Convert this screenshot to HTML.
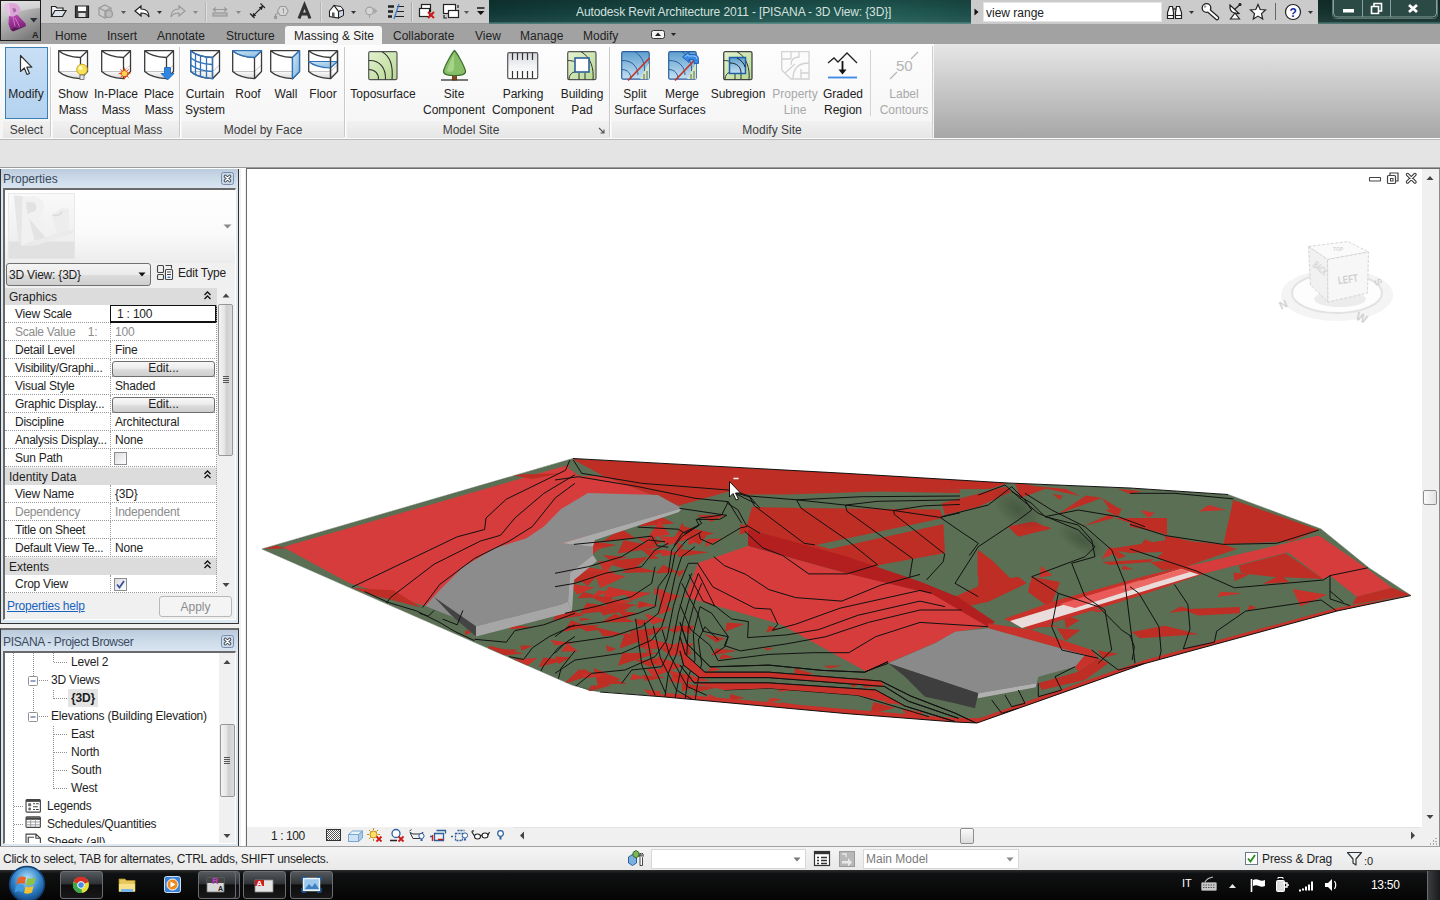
<!DOCTYPE html>
<html><head><meta charset="utf-8">
<style>
*{box-sizing:border-box;margin:0;padding:0}
html,body{width:1440px;height:900px;overflow:hidden}
body{position:relative;background:#e3e3e3;font-family:"Liberation Sans",sans-serif;font-size:12px;color:#1e1e1e}
.abs{position:absolute}
.t{position:absolute;white-space:nowrap;line-height:14px}
/* title bar */
#title{left:0;top:0;width:1440px;height:24px;background:linear-gradient(90deg,#0f3533 0,#103836 34%,#1a4d49 48%,#215b55 62%,#1c4f4a 67%,#15332f 92%,#13302c 100%)}
#title:after{content:'';position:absolute;left:0;top:0;width:100%;height:24px;background:linear-gradient(180deg,rgba(0,0,0,0.180) 0,rgba(0,0,0,0) 55%,rgba(255,255,255,0.050) 90%,rgba(150,200,195,0.450) 96%,rgba(150,200,195,0.450) 100%)}
#qat{left:40px;top:0;width:449px;height:24px;background:#cbcbcb;border-bottom:1px solid #9a9a9a}
#search{left:971px;top:0;width:347px;height:24px;background:#cbcbcb}
#tabs{left:0;top:24px;width:1440px;height:21px;background:#a2a2a2}
#appbtn{display:none}
.tab{position:absolute;top:28px;font-size:12px;line-height:16px;color:#222;white-space:nowrap}
#ribbon{left:0;top:44px;width:934px;height:96px;background:linear-gradient(180deg,#fdfdfd 0,#f4f4f4 100%)}
#ribbonR{left:934px;top:44px;width:506px;height:95px;background:linear-gradient(180deg,#e6e6e6 0,#a6a6a6 100%)}
#optbar{left:0;top:140px;width:1440px;height:28px;background:#e4e4e4}
</style></head><body>
<div id="title" class="abs"></div>
<div id="qat" class="abs"></div>
<div id="search" class="abs"></div>
<div id="tabs" class="abs"></div>
<div id="appbtn" class="abs"></div>
<div id="ribbon" class="abs"></div>
<div id="ribbonR" class="abs"></div>
<div id="optbar" class="abs"></div>
<!-- ===== title text ===== -->
<div class="t" style="left:576px;top:4px;font-size:12px;line-height:16px;color:#d6e0df;letter-spacing:-0.120px">Autodesk Revit Architecture 2011 - [PISANA - 3D View: {3D}]</div>
<!-- app button R -->
<svg class="abs" style="left:0;top:0" width="41" height="41" viewBox="0 0 41 41">
 <defs><linearGradient id="ab1" x1="0" y1="0" x2="0.600" y2="1"><stop offset="0" stop-color="#e4e4e4"/><stop offset="0.450" stop-color="#b4b4b4"/><stop offset="1" stop-color="#7c7c7c"/></linearGradient>
 <linearGradient id="ab2" x1="0" y1="0" x2="0" y2="1"><stop offset="0" stop-color="#e2e2e2"/><stop offset="1" stop-color="#bcbcbc"/></linearGradient>
 <linearGradient id="rg" x1="0" y1="0" x2="0.300" y2="1"><stop offset="0" stop-color="#c04cb6"/><stop offset="1" stop-color="#7d1f7a"/></linearGradient></defs>
 <rect x="0" y="0" width="41" height="41" fill="#1c1c1c"/>
 <rect x="1" y="1" width="39" height="39" fill="url(#ab1)"/>
 <path d="M1 24 Q10 10 40 8 V1 H1Z" fill="url(#ab2)" opacity="0.850"/>
 <path d="M9 16 L13 16.500 L17 14.500 L26 24 L24 27 L18 27.500 L14 27 L10.500 29.500 L8.500 24Z" fill="url(#rg)"/>
 <path d="M10.500 29.500 L14 27 L18 27.500 L24 27 L26 24 L25.500 26.500 L13 31.500Z" fill="#5e155c"/>
 <path d="M13.200 17 L15 26.500 M15 17.500 L19.500 26.500" stroke="#d67ccf" stroke-width="0.900" fill="none"/>
 <path d="M5 4.500 L9 3 L16 3.500 Q20 6 20.500 10 Q20 13 17 14.500 L13 16.500 L9 16 L7 12 L4.500 8Z" fill="#dca6d9"/>
 <path d="M5 4.500 L9 3 L10.500 15 L9 16 L7 12 L4.500 8Z" fill="#e9c0e6"/>
 <path d="M12.500 8 L15.500 8.500 Q16.500 10 16 11.500 L13.500 12.500Z" fill="#a668a6"/>
 <path d="M30 18 h7.500 l-3.750 4.500 z" fill="#2c3038"/>
 <text x="32" y="38" font-family="Liberation Sans" font-weight="bold" font-size="9" fill="#222">A</text>
</svg>
<!-- QAT icons -->
<svg class="abs" style="left:40px;top:0" width="450" height="24" viewBox="40 0 450 24" fill="none" stroke="#222" stroke-width="1.2">
 <!-- open -->
 <path d="M51.500 16.500 V6.500 h4 l1.500 1.500 h6 v2.500" fill="#f4f4f4"/><path d="M51.500 16.500 l3.500-6 h11 l-3.500 6 z" fill="#dde3ea"/>
 <!-- save -->
 <path d="M75.5 6 h13 v11.5 h-13 z" fill="#444"/><rect x="78" y="6.5" width="8" height="4.5" fill="#fff" stroke="none"/><rect x="78.5" y="13" width="7" height="4" fill="#ddd" stroke="none"/>
 <!-- sync gray -->
 <g stroke="#9a9a9a"><path d="M99 8 l6-3 6 3 v7 l-6 3 -6-3 z"/><path d="M99 8 l6 3 6-3 M105 11 v7"/><circle cx="109" cy="14" r="3.5" fill="#bbb"/></g>
 <path d="M121 11 h5 l-2.500 3 z" fill="#555" stroke="none"/>
 <!-- undo -->
 <path d="M135 11 l6-5 v3 q8 0 8 8 q-2-4-8-4 v3 z" fill="#fff"/>
 <path d="M157 11 h5 l-2.500 3 z" fill="#333" stroke="none"/>
 <!-- redo gray -->
 <path d="M185 11 l-6-5 v3 q-8 0-8 8 q2-4 8-4 v3 z" stroke="#9a9a9a"/>
 <path d="M193 11 h5 l-2.5 3 z" fill="#888" stroke="none"/>
 <path d="M205.500 2 v20" stroke="#b4b4b4" stroke-width="1"/><path d="M206.500 2 v20" stroke="#dedede" stroke-width="1"/>
 <!-- measure gray -->
 <g stroke="#9a9a9a"><path d="M213 9.5 h14 M213 9.5 l3-2 M213 9.5 l3 2 M227 9.5 l-3-2 M227 9.5 l-3 2"/><rect x="213" y="13" width="14" height="3" fill="#bbb"/></g>
 <path d="M236 11 h5 l-2.5 3 z" fill="#888" stroke="none"/>
 <!-- aligned dim -->
 <path d="M252.500 16.500 l10-10 M250 13.500 l4.500 4.500 M260.500 3.500 l4.500 4.500" stroke-width="1.100"/><path d="M252 17 l1.200-4.200 3 3z M263 6 l-1.200 4.200 -3-3z" fill="#222" stroke="none"/>
 <!-- tag gray -->
 <g stroke="#9a9a9a" stroke-width="1.100"><path d="M277.500 11 l2.700-4.500 h5.300 l2.700 4.500 -2.700 4.500 h-5.300z" fill="#d8d8d8"/><path d="M282.300 9.500 l1.200-1 v5" stroke-width="1"/><path d="M278 13 l-2.500 1.500 v2"/><rect x="274.500" y="16.500" width="2" height="2" fill="#d8d8d8"/></g>
 <!-- A text -->
 <path d="M299 18.500 L304.500 5 L310 18.500 M301 14 h7" stroke-width="3" stroke="#333"/>
 <path d="M320.500 2 v20" stroke="#b4b4b4" stroke-width="1"/><path d="M321.500 2 v20" stroke="#dedede" stroke-width="1"/>
 <!-- house -->
 <path d="M334 5.500 L341 6.500 L343.500 10 L338.500 11.500Z" fill="#f4f4f4" stroke-width="1"/><path d="M338.500 11.500 L343.500 10 V15.500 L338.500 18Z" fill="#c9d6e6" stroke-width="1"/><path d="M329.500 11 L334 5.500 L338.500 11.500 V18 L329.500 16.500Z" fill="#fff" stroke-width="1.100"/><rect x="332" y="12.500" width="2.500" height="4.500" fill="#555" stroke="none"/>
 <path d="M351 11 h5 l-2.500 3 z" fill="#333" stroke="none"/>
 <!-- circle arrow gray -->
 <g stroke="#a0a0a0"><circle cx="369.500" cy="11" r="3.800" fill="#d4d4d4"/><path d="M373.500 7.500 l4 3.500 -4 3.500z" fill="#a8a8a8" stroke="none"/><path d="M369.500 15 v3" stroke-width="1"/></g>
 <!-- thin lines -->
 <path d="M388 6.5 h6 M388 11.5 h5 M388 16.5 h4" stroke-width="2.4"/><path d="M397 6.5 h7 M396 11.5 h8 M395 16.5 h9" stroke-width="1"/><path d="M399 4 l-5 15" stroke="#3a78c8" stroke-width="1.3"/>
 <path d="M411.5 2 v20" stroke="#aaa" stroke-width="1"/><path d="M412.5 2 v20" stroke="#ddd" stroke-width="1"/>
 <!-- close hidden -->
 <rect x="421.500" y="4.500" width="9" height="7" fill="#fff"/><rect x="419.500" y="8.500" width="10" height="8" fill="#fff"/><path d="M428 12 l6 6 M434 12 l-6 6" stroke="#d01818" stroke-width="2"/>
 <!-- switch windows -->
 <rect x="443.500" y="4.500" width="12" height="9" fill="#fff"/><rect x="448.500" y="10.500" width="10" height="7" fill="#fff"/><path d="M444 15 v3 h3 M458 8 v-3" />
 <path d="M464 11 h5 l-2.500 3 z" fill="#555" stroke="none"/>
 <!-- customize -->
 <path d="M477 8 h7.500" stroke-width="1.600"/><path d="M477 11 h7.500 l-3.750 4 z" fill="#111" stroke="none"/>
</svg>
<!-- search strip -->
<div class="abs" style="left:983px;top:2px;width:179px;height:20px;background:#fff;border:1px solid #e4e4e4"></div>
<div class="t" style="left:986px;top:5px;font-size:12px;line-height:16px;color:#222">view range</div>
<svg class="abs" style="left:971px;top:0" width="350" height="24" viewBox="971 0 350 24" fill="none" stroke="#222" stroke-width="1.200">
 <path d="M974.500 8.500 v7 l4-3.500z" fill="#111" stroke="none"/>
 <!-- binoculars -->
 <path d="M1167.500 18.500 v-6 l2-6 h3 l1 6 v6 z M1175.500 18.500 v-6 l1-6 h3 l2 6 v6 z" fill="#fff"/><path d="M1173 9 h3" /><path d="M1167.500 15.500 h6 M1175.500 15.500 h6"/>
 <path d="M1189 11 h5 l-2.500 3 z" fill="#333" stroke="none"/>
 <!-- key -->
 <path d="M1209 11 L1217 18" stroke="#222" stroke-width="4.600" stroke-linecap="round"/><circle cx="1206.500" cy="8" r="4.300" fill="#fff" stroke="#222" stroke-width="1.300"/><path d="M1209 11 L1217 18" stroke="#fff" stroke-width="2.200" stroke-linecap="round"/><circle cx="1205" cy="6.500" r="1.200" fill="#999" stroke="none"/>
 <!-- satellite -->
 <path d="M1230 5 q-1 9 9 8.500 z" fill="#fff"/><path d="M1234.500 9.500 l5-4.500"/><circle cx="1240" cy="4.500" r="1" fill="#222"/><path d="M1235 13 l-4.500 6 h9 z" fill="#fff"/>
 <!-- star -->
 <path d="M1258 4.500 l2.200 5 5.300 0.500 -4 3.600 1.200 5.400 -4.700-2.900 -4.700 2.900 1.200-5.400 -4-3.600 5.300-0.500z" fill="#fff"/>
 <path d="M1275.500 3 v17" stroke="#666" stroke-width="1"/>
 <!-- help -->
 <circle cx="1293" cy="12" r="7.500" fill="#fff"/>
 <text x="1289.500" y="16.500" font-family="Liberation Sans" font-weight="bold" font-size="12" fill="#1a2ca0" stroke="none">?</text>
 <path d="M1308 11 h5 l-2.500 3 z" fill="#333" stroke="none"/>
</svg>
<!-- window controls -->
<svg class="abs" style="left:1325px;top:0" width="115" height="24" viewBox="1325 0 115 24">
 <path d="M1333.500 0 v13 q0 4 4 4 h95 q4 0 4-4 v-13" fill="#2b4a45" stroke="#8aa09c" stroke-width="1"/>
 <path d="M1362.500 0 v17 M1390.500 0 v17" stroke="#8aa09c" stroke-width="1"/><path d="M1332.500 0 v14 q0 4.500 4.500 4.500 h96 q4.500 0 4.500-4.500 v-14" fill="none" stroke="#5a7571" stroke-width="1"/>
 <rect x="1343" y="9" width="11" height="3.500" fill="#fff"/>
 <path d="M1371.500 6.500 h7 v7 h-7 z M1374 6 v-2.500 h7.500 v7.500 h-2.500" fill="none" stroke="#fff" stroke-width="1.600"/>
 <path d="M1409 5 l8 7 M1417 5 l-8 7" stroke="#fff" stroke-width="2.800"/>
</svg>
<!-- tabs -->
<div class="abs" style="left:285px;top:26px;width:97px;height:19px;background:#f6f6f6;border-radius:3px 3px 0 0"></div>
<div class="tab" style="left:55px">Home</div>
<div class="tab" style="left:107px">Insert</div>
<div class="tab" style="left:157px">Annotate</div>
<div class="tab" style="left:226px">Structure</div>
<div class="tab" style="left:294px">Massing &amp; Site</div>
<div class="tab" style="left:393px">Collaborate</div>
<div class="tab" style="left:475px">View</div>
<div class="tab" style="left:520px">Manage</div>
<div class="tab" style="left:583px">Modify</div>
<svg class="abs" style="left:648px;top:28px" width="32" height="14" viewBox="0 0 32 14"><rect x="3.500" y="2.500" width="13" height="8" rx="2" fill="#f4f4f4" stroke="#333"/><path d="M7 8 h6 l-3-3.500z" fill="#222"/><path d="M23 5 h5 l-2.500 3z" fill="#222"/></svg>
<!-- ===== ribbon ===== -->
<style>
.rl{position:absolute;top:86px;width:90px;text-align:center;font-size:12px;line-height:16px;color:#222;white-space:nowrap}
.rl.dis{color:#a8a8a8}
.pl{position:absolute;top:122px;text-align:center;font-size:12px;line-height:18px;color:#3c3c3c;white-space:nowrap;background:linear-gradient(180deg,#f1f1f1,#e6e6e6);height:17px;top:121px}
.psep{position:absolute;top:47px;width:2px;height:90px;border-left:1px solid #c9c9c9;border-right:1px solid #fff}
.ic{position:absolute;overflow:visible}
</style>
<div class="abs" style="left:0;top:139px;width:1440px;height:1px;background:#b9b9b9"></div>
<div class="abs" style="left:0;top:138px;width:1440px;height:1px;background:#fafafa"></div>
<div class="abs" style="left:933px;top:45px;width:1px;height:93px;background:#f4f4f4"></div>
<!-- modify button -->
<div class="abs" style="left:5px;top:47px;width:43px;height:72px;background:linear-gradient(180deg,#c9dff5 0,#bdd8f2 50%,#b4d2ef 100%);border:1px solid #3c7fb1"></div>
<svg class="ic" style="left:18px;top:54px" width="16" height="24" viewBox="0 0 16 24"><path d="M2.500 1.500 V17.500 L6.300 14 L9 20.500 L11.500 19.500 L8.800 13.200 H13.800 Z" fill="#fff" stroke="#333" stroke-width="1.200" stroke-linejoin="round"/></svg>
<div class="rl" style="left:-19px">Modify</div>
<!-- panel labels -->
<div class="pl" style="left:3px;width:47px">Select</div>
<div class="pl" style="left:53px;width:126px">Conceptual Mass</div>
<div class="pl" style="left:182px;width:162px">Model by Face</div>
<div class="pl" style="left:347px;width:262px;padding-right:14px">Model Site</div>
<div class="pl" style="left:612px;width:320px">Modify Site</div>
<svg class="ic" style="left:598px;top:127px" width="8" height="8" viewBox="0 0 8 8"><path d="M1 1 l4.500 4.500 M6 2.500 v3.500 h-3.500" stroke="#555" fill="none" stroke-width="1.100"/></svg>
<div class="psep" style="left:50px"></div><div class="psep" style="left:179px"></div><div class="psep" style="left:344px"></div><div class="psep" style="left:609px"></div>
<div class="abs" style="left:870px;top:50px;width:1px;height:66px;background:#d4d4d4"></div>
<div class="abs" style="left:932px;top:46px;width:1px;height:92px;background:#d0d0d0"></div>
<!-- labels -->
<div class="rl" style="left:28px">Show<br>Mass</div>
<div class="rl" style="left:71px">In-Place<br>Mass</div>
<div class="rl" style="left:114px">Place<br>Mass</div>
<div class="rl" style="left:160px">Curtain<br>System</div>
<div class="rl" style="left:203px">Roof</div>
<div class="rl" style="left:241px">Wall</div>
<div class="rl" style="left:278px">Floor</div>
<div class="rl" style="left:338px">Toposurface</div>
<div class="rl" style="left:409px">Site<br>Component</div>
<div class="rl" style="left:478px">Parking<br>Component</div>
<div class="rl" style="left:537px">Building<br>Pad</div>
<div class="rl" style="left:590px">Split<br>Surface</div>
<div class="rl" style="left:637px">Merge<br>Surfaces</div>
<div class="rl" style="left:693px">Subregion</div>
<div class="rl dis" style="left:750px">Property<br>Line</div>
<div class="rl" style="left:798px">Graded<br>Region</div>
<div class="rl dis" style="left:859px">Label<br>Contours</div>
<!-- icons -->
<svg width="0" height="0" style="position:absolute"><defs>
 <linearGradient id="mfl" x1="0" y1="0" x2="0" y2="1"><stop offset="0" stop-color="#fff"/><stop offset="0.700" stop-color="#fff"/><stop offset="1" stop-color="#d9d9d9"/></linearGradient>
 <linearGradient id="blu" x1="0" y1="0" x2="1" y2="1"><stop offset="0" stop-color="#d3e8f6"/><stop offset="1" stop-color="#7fb6dd"/></linearGradient>
 <linearGradient id="grn" x1="0" y1="0" x2="1" y2="1"><stop offset="0" stop-color="#e3f1cf"/><stop offset="1" stop-color="#b7d993"/></linearGradient>
 <linearGradient id="blu2" x1="0" y1="0" x2="0" y2="1"><stop offset="0" stop-color="#5f9fce"/><stop offset="1" stop-color="#c5e0f2"/></linearGradient>
 <g id="mass"><path d="M0.700 0.700 H29.500 V21.500 L22.500 28.700 C13 28 5 25.500 0.700 21.500 Z" fill="url(#mfl)" stroke="none"/><path d="M0.700 21.500 H22.500 L29.500 15" stroke="#c4c4c4" stroke-width="1" fill="none"/><path d="M0.700 0.700 H29.500 V21.500 L22.500 28.700 C13 28 5 25.500 0.700 21.500 Z M0.700 0.700 C5 4.500 13 7 22.500 7.500 L29.500 0.700 M22.500 7.500 V28.700" fill="none" stroke="#3a3a3a" stroke-width="1.300" stroke-linejoin="round"/></g>
</defs></svg>
<svg class="ic" style="left:58px;top:50px" width="32" height="32" viewBox="0 0 32 32"><use href="#mass"/><circle cx="24" cy="19.500" r="5.300" fill="#f9e256" stroke="#c9a820" stroke-width="1"/><circle cx="22.500" cy="18" r="2" fill="#fffbd0"/><rect x="22" y="25" width="4" height="4.500" fill="#e8e8e8" stroke="#666" stroke-width="0.800"/></svg>
<svg class="ic" style="left:101px;top:50px" width="32" height="32" viewBox="0 0 32 32"><use href="#mass"/><g transform="translate(23.500 23.500)"><path d="M0-6.500 L1.500-2.500 L5-5 L2.500-1.500 L6.500 0 L2.500 1.500 L5 5 L1.500 2.500 L0 6.500 L-1.500 2.500 L-5 5 L-2.500 1.500 L-6.500 0 L-2.500-1.500 L-5-5 L-1.500-2.500Z" fill="#e8501c"/><circle r="2.600" fill="#ffd84a"/></g></svg>
<svg class="ic" style="left:144px;top:50px" width="32" height="32" viewBox="0 0 32 32"><use href="#mass"/><path d="M20.500 17.500 h6 v6 h3.500 l-6.500 6.500 -6.500-6.500 h3.500z" fill="#2f86e0" stroke="#1d62b5" stroke-width="0.800"/></svg>
<!-- curtain -->
<svg class="ic" style="left:190px;top:50px" width="32" height="32" viewBox="0 0 32 32"><use href="#mass"/><path d="M0.700 0.700 C5 4.500 13 7 22.500 7.500 V28.700 C13 28 5 25.500 0.700 21.500 Z M0.700 7.700 C5 11.500 13 14 22.500 14.500 M0.700 14.700 C5 18.500 13 21 22.500 21.500 M5.500 4 V25 M10.500 6 V27 M16.500 7 V28.300" fill="none" stroke="#2f72b8" stroke-width="1.300"/></svg>
<!-- roof -->
<svg class="ic" style="left:232px;top:50px" width="32" height="32" viewBox="0 0 32 32"><use href="#mass"/><path d="M0.700 0.700 H29.500 L22.500 7.500 C13 7 5 4.500 0.700 0.700Z" fill="url(#blu)" stroke="#2f72b8" stroke-width="1.300" stroke-linejoin="round"/></svg>
<!-- wall -->
<svg class="ic" style="left:270px;top:50px" width="32" height="32" viewBox="0 0 32 32"><use href="#mass"/><path d="M22.500 7.500 L29.500 0.700 V21.500 L22.500 28.700Z" fill="url(#blu)" stroke="#2f72b8" stroke-width="1.300" stroke-linejoin="round"/></svg>
<!-- floor -->
<svg class="ic" style="left:308px;top:50px" width="32" height="32" viewBox="0 0 32 32"><use href="#mass"/><path d="M0.700 11.500 H29.500 L22.500 18 C13 17.500 5 15.500 0.700 11.500Z" fill="url(#blu)" stroke="#2f72b8" stroke-width="1.200" stroke-linejoin="round"/><path d="M22.500 7.500 V28.700 M29.500 0.700 V21.500" stroke="#3a3a3a" stroke-width="1.300" fill="none"/></svg>
<!-- toposurface -->
<svg class="ic" style="left:368px;top:51px" width="30" height="30" viewBox="0 0 30 30"><rect x="0.700" y="0.700" width="28.300" height="28" rx="1.500" fill="url(#grn)" stroke="#555" stroke-width="1.200"/><path d="M14 0.700 C24 6 25 18 24 28.700 M0.700 9.500 C12 9 18 17 17.500 28.700 M0.700 18.500 C7 18.500 11 23 10.500 28.700" fill="none" stroke="#333" stroke-width="1.100"/></svg>
<!-- tree -->
<svg class="ic" style="left:440px;top:49px" width="30" height="32" viewBox="0 0 30 32"><path d="M1 31 H28" stroke="#222" stroke-width="1.200"/><rect x="12.500" y="25" width="4" height="6" fill="#8a4a1c" stroke="#5a2c0c" stroke-width="0.800"/><path d="M14.500 1.500 C17 4 24 16 25.500 22 C26 25.500 21 26.500 14.500 26.500 C8 26.500 3 25.500 3.500 22 C5 16 12 4 14.500 1.500Z" fill="#86bf68" stroke="#3d6b2c" stroke-width="1.200"/><path d="M14 5 C11 11 8 17 7 22 C10 23.500 13 23 14 20Z" fill="#b4dc98" opacity="0.700"/></svg>
<!-- parking -->
<svg class="ic" style="left:507px;top:52px" width="32" height="28" viewBox="0 0 32 28"><defs><linearGradient id="pk" x1="0" y1="0" x2="0" y2="1"><stop offset="0" stop-color="#d4d7dc"/><stop offset="0.500" stop-color="#f2f3f5"/><stop offset="1" stop-color="#fff"/></linearGradient></defs><rect x="0.700" y="0.700" width="30" height="26" rx="1.500" fill="url(#pk)" stroke="#555" stroke-width="1.200"/><path d="M5.500 1 v7 M10.500 1 v7 M15.500 1 v7 M20.500 1 v7 M25.500 1 v7 M5.500 19 v7 M10.500 19 v7 M15.500 19 v7 M20.500 19 v7 M25.500 19 v7" stroke="#333" stroke-width="1.200"/></svg>
<!-- building pad -->
<svg class="ic" style="left:567px;top:51px" width="30" height="30" viewBox="0 0 30 30"><rect x="0.700" y="0.700" width="28.300" height="28" rx="1.500" fill="url(#grn)" stroke="#555" stroke-width="1.200"/><path d="M14 0.700 C24 6 27 18 26 28.700 M0.700 9.500 C6 9.500 8 11 8 11 M2 28.700 C2 24 5 21 8 21 M12 22 V28.700 M18 22 V28.700" fill="none" stroke="#333" stroke-width="1"/><rect x="8" y="7" width="14" height="14" fill="#fff" stroke="#2b5f9e" stroke-width="1.600"/></svg>
<!-- split surface -->
<svg class="ic" style="left:621px;top:51px" width="30" height="30" viewBox="0 0 30 30"><rect x="0.700" y="0.700" width="27.500" height="27.500" rx="1.500" fill="url(#blu2)" stroke="#2b5f9e" stroke-width="1.200"/><path d="M19 28 H28 V12Z" fill="#d3e8c0"/><path d="M14 0.700 C22 6 24 14 23.500 20 M0.700 9.500 C12 9 17 17 17 24 M0.700 18.500 C7 18.500 10 23 10 28" fill="none" stroke="#2b5f9e" stroke-width="1"/><path d="M7 29.500 L28.500 7" stroke="#c0392b" stroke-width="1.800"/><path d="M23 28 V23 M26 28 V20" stroke="#444" stroke-width="0.800"/></svg>
<!-- merge surfaces -->
<svg class="ic" style="left:668px;top:51px" width="32" height="30" viewBox="0 0 32 30"><rect x="0.700" y="0.700" width="27.500" height="27.500" rx="1.500" fill="url(#blu2)" stroke="#2b5f9e" stroke-width="1.200"/><path d="M19 28 H28 V12Z" fill="#d3e8c0"/><path d="M14 0.700 C22 6 24 14 23.500 20 M0.700 9.500 C12 9 17 17 17 24 M0.700 18.500 C7 18.500 10 23 10 28" fill="none" stroke="#2b5f9e" stroke-width="1"/><path d="M7 29.500 L28.500 7" stroke="#c0392b" stroke-width="1.800"/><path d="M23 28 V23 M26 28 V20" stroke="#444" stroke-width="0.800"/><path d="M14.500 6 L21 0.500 V3.500 H26 Q30.500 3.500 30.500 8.500 V12.500 H26 V9.500 Q26 8.500 25 8.500 H21 V11.500Z" fill="#3b8ae6" stroke="#1d5fb5" stroke-width="0.900" stroke-linejoin="round"/><path d="M17 6 L20 3.500 V5 H26 Q29 5 29 8" stroke="#9cc8f5" stroke-width="0.900" fill="none"/></svg>
<!-- subregion -->
<svg class="ic" style="left:723px;top:51px" width="30" height="30" viewBox="0 0 30 30"><rect x="0.700" y="0.700" width="28.300" height="28" rx="1.500" fill="url(#grn)" stroke="#444" stroke-width="1.300"/><path d="M14 0.700 C24 6 27 18 26 28.700 M0.700 9.500 C6 9.500 8 11 8 11 M2 28.700 C2 24 5 21 8 21 M12 22 V28.700 M18 22 V28.700" fill="none" stroke="#333" stroke-width="1"/><rect x="6.500" y="6.500" width="16" height="16" fill="url(#blu2)" stroke="#1f5fa8" stroke-width="1.500"/><path d="M7 12 C14 12 18 16 18 22 M14 7 C18 9 21 12 22 16" fill="none" stroke="#222" stroke-width="1"/></svg>
<!-- property line (disabled) -->
<svg class="ic" style="left:781px;top:51px" width="30" height="30" viewBox="0 0 30 30" fill="none" stroke="#d2d2d2" stroke-width="1.300"><path d="M0.700 0.700 H28 V28 H10 L0.700 19Z M10 0.700 V8 M0.700 8 H10 M28 12 C18 12 12 17 12 28 M18 0.700 V6 C12 6 10 10 10 14 M4 22 L14 13 M20 18 V28 M20 22 H28"/></svg>
<!-- graded region -->
<svg class="ic" style="left:827px;top:51px" width="32" height="30" viewBox="0 0 32 30" fill="none"><path d="M1 12 L7 7 L11 11 L20 2 L30 12" stroke="#222" stroke-width="1.300"/><path d="M15.500 10 V21" stroke="#111" stroke-width="1.800"/><path d="M11.500 18.500 h8 l-4 5z" fill="#111"/><path d="M1 26.500 H30" stroke="#3b8ae6" stroke-width="1.800"/></svg>
<!-- label contours (disabled) -->
<svg class="ic" style="left:889px;top:51px" width="30" height="30" viewBox="0 0 30 30"><path d="M1 28 L8 21 M22 8 L29 1" stroke="#b4b4b4" stroke-width="1.100"/><text x="7" y="20" font-family="Liberation Sans" font-size="15" fill="#b4b4b4">50</text></svg>

<style>
.ph{position:absolute;left:1px;width:237px;height:19px;background:linear-gradient(180deg,#bccbdc 0,#cfdcea 60%,#d9e5f1 100%)}
.pht{position:absolute;left:3px;font-size:12px;line-height:16px;color:#3a4a60;white-space:nowrap}
.pr{position:absolute;left:5px;width:212px;height:18px;border-bottom:1px dotted #9a9a9a;background:#fff}
.pr .l{letter-spacing:-0.250px;position:absolute;left:10px;top:1px;line-height:16px;white-space:nowrap}
.pr .v{letter-spacing:-0.200px;position:absolute;left:110px;top:1px;line-height:16px;white-space:nowrap}
.pr .d{position:absolute;left:105px;top:0;width:1px;height:18px;border-left:1px dotted #9a9a9a}
.pr.g .l,.pr.g .v{color:#8c8c8c}
.pg{position:absolute;left:5px;width:212px;height:18px;background:#dcdcdc}
.pg span{position:absolute;left:4px;top:1px;line-height:16px}
.eb{position:absolute;left:112px;width:103px;height:16px;border:1px solid #6e6e6e;border-radius:3px;background:linear-gradient(180deg,#f8f8f8 0,#ececec 45%,#dcdcdc 55%,#cecece 100%);text-align:center;line-height:13px;box-shadow:0 1px 0 #8a8a8a}
.tr{position:absolute;letter-spacing:-0.200px;font-size:12px;line-height:16px;white-space:nowrap;color:#1e1e1e}
</style>
<!-- seams -->
<div class="abs" style="left:0;top:167px;width:1440px;height:1px;background:#9c9c9c"></div>
<div class="abs" style="left:0;top:168px;width:246px;height:1px;background:#fff"></div>
<div class="abs" style="left:0;top:169px;width:246px;height:678px;background:#f0f0f0"></div>
<!-- properties frame -->
<div class="abs" style="left:0;top:169px;width:239px;height:455px;background:#dde7f2;border-left:1px solid #333;border-right:1px solid #333;border-bottom:1px solid #333"></div>
<div class="ph" style="top:169px"></div>
<div class="pht" style="top:171px">Properties</div>
<svg class="abs" style="left:221px;top:172px" width="13" height="13" viewBox="0 0 13 13"><rect x="0.500" y="0.500" width="12" height="12" rx="2" fill="#c9d8ea" stroke="#7b8ca6"/><path d="M4.300 4.300 L8.700 8.700 M8.700 4.300 L4.300 8.700" stroke="#3a4350" stroke-width="3.200" stroke-linecap="round"/><path d="M4.300 4.300 L8.700 8.700 M8.700 4.300 L4.300 8.700" stroke="#fff" stroke-width="1.400" stroke-linecap="round"/></svg>
<!-- inner panel -->
<div class="abs" style="left:3px;top:188px;width:233px;height:432px;background:#f0f0f0;border-top:2px solid #6a6a6a;border-left:2px solid #6a6a6a;border-right:1px solid #fff;border-bottom:1px solid #fff"></div>
<div class="abs" style="left:5px;top:190px;width:230px;height:73px;background:linear-gradient(180deg,#fff 0,#fafafa 60%,#ececec 100%)"></div>
<!-- preview -->
<svg class="abs" style="left:8px;top:193px" width="67" height="66" viewBox="0 0 67 66"><defs><linearGradient id="pv" x1="0" y1="0" x2="0" y2="1"><stop offset="0" stop-color="#f9f9f9"/><stop offset="0.700" stop-color="#efefef"/><stop offset="1" stop-color="#e6e6e6"/></linearGradient></defs>
<rect x="0.500" y="0.500" width="66" height="65" fill="url(#pv)" stroke="#e9e9e9"/>
<path d="M0.500 48.500 H66.500 V65.500 H0.500Z" fill="#e1e1e1"/>
<path d="M5.800 2.300 L15 3.500 L13.300 53 L10.400 47.400Z" fill="#e6e6e6"/>
<path d="M14.400 4 L25.400 2.900 Q37 5 36 16 Q35 23 30 24.500 L45 41.500 L38 45 L26.600 47.400 L13.300 53Z" fill="#f1f1f1"/>
<path d="M18 9 L26.500 9.200 Q29.500 13 27.500 17.500 L19.500 21Z" fill="#e2e2e2"/>
<path d="M21 25.500 L26.600 47.400 L38 45Z" fill="#e3e3e3"/>
<path d="M43 22 L54 15 L61 16 V37 L50 42 Z" fill="#ededed"/>
<path d="M45 22 Q50 24 54 19" stroke="#dcdcdc" stroke-width="1.500" fill="none"/>
<path d="M13.300 53 L45 41.500 L66 36 V40 L30 52Z" fill="#ebebeb"/>
</svg>
<svg class="abs" style="left:223px;top:224px" width="9" height="5" viewBox="0 0 9 5"><path d="M0.500 0.500 h8 l-4 4z" fill="#8a8a8a"/></svg>
<!-- combo -->
<div class="abs" style="left:6px;top:263px;width:145px;height:23px;border:1px solid #707070;border-radius:3px;background:linear-gradient(180deg,#f4f4f4 0,#ebebeb 50%,#dddddd 51%,#cfcfcf 100%)"></div>
<div class="tr" style="left:9px;top:267px">3D View: {3D}</div>
<svg class="abs" style="left:138px;top:272px" width="9" height="5" viewBox="0 0 9 5"><path d="M0.500 0.500 h7 l-3.500 4z" fill="#111"/></svg>
<svg class="abs" style="left:156px;top:264px" width="18" height="18" viewBox="0 0 18 18" fill="none" stroke="#444" stroke-width="1.100"><rect x="1.500" y="1.500" width="6" height="7" rx="1"/><rect x="1.500" y="10.500" width="6" height="5" rx="1"/><rect x="9.500" y="5.500" width="7" height="10" rx="1" fill="#fff"/><path d="M11 8 h4 M11 10.500 h4" /><rect x="11.500" y="12.500" width="3" height="1.500" fill="#3a78c8" stroke="none"/><path d="M9.500 1.500 h6 v3"/></svg>
<div class="tr" style="left:178px;top:265px">Edit Type</div>
<!-- table -->
<div class="pg" style="top:288px;height:17px"><span>Graphics</span></div>
<div class="pr" style="top:305px"><span class="l">View Scale</span><i class="d"></i></div>
<div class="abs" style="left:110px;top:305px;width:107px;height:18px;border:1px solid #111;background:#fff;box-shadow:inset 0 0 0 0 #000;border-width:1px 2px 2px 1px"></div>
<div class="tr" style="left:117px;top:306px">1 : 100</div>
<div class="pr g" style="top:323px"><span class="l">Scale Value&nbsp;&nbsp;&nbsp; 1:</span><span class="v">100</span><i class="d"></i></div>
<div class="pr" style="top:341px"><span class="l">Detail Level</span><span class="v">Fine</span><i class="d"></i></div>
<div class="pr" style="top:359px"><span class="l">Visibility/Graphi...</span><i class="d"></i></div>
<div class="eb" style="top:361px">Edit...</div>
<div class="pr" style="top:377px"><span class="l">Visual Style</span><span class="v">Shaded</span><i class="d"></i></div>
<div class="pr" style="top:395px"><span class="l">Graphic Display...</span><i class="d"></i></div>
<div class="eb" style="top:397px">Edit...</div>
<div class="pr" style="top:413px"><span class="l">Discipline</span><span class="v">Architectural</span><i class="d"></i></div>
<div class="pr" style="top:431px"><span class="l">Analysis Display...</span><span class="v">None</span><i class="d"></i></div>
<div class="pr" style="top:449px"><span class="l">Sun Path</span><i class="d"></i></div>
<div class="abs" style="left:114px;top:452px;width:13px;height:13px;border:1px solid #8a8f96;background:linear-gradient(135deg,#dcdcdc,#fff)"></div>
<div class="pg" style="top:468px"><span>Identity Data</span></div>
<div class="pr" style="top:485px"><span class="l">View Name</span><span class="v">{3D}</span><i class="d"></i></div>
<div class="pr g" style="top:503px"><span class="l">Dependency</span><span class="v">Independent</span><i class="d"></i></div>
<div class="pr" style="top:521px"><span class="l">Title on Sheet</span><i class="d"></i></div>
<div class="pr" style="top:539px"><span class="l">Default View Te...</span><span class="v">None</span><i class="d"></i></div>
<div class="pg" style="top:558px"><span>Extents</span></div>
<div class="pr" style="top:575px"><span class="l">Crop View</span><i class="d"></i></div>
<div class="abs" style="left:114px;top:578px;width:13px;height:13px;border:1px solid #8a8f96;background:linear-gradient(135deg,#dcdcdc,#fff)"></div>
<svg class="abs" style="left:115px;top:579px" width="11" height="11" viewBox="0 0 11 11"><path d="M2 5.500 L4.500 8.500 L9 2" stroke="#3b4f9e" stroke-width="1.800" fill="none"/></svg>
<svg class="abs" style="left:203px;top:290px" width="9" height="290" viewBox="0 0 9 290" fill="none" stroke="#111" stroke-width="1.300"><path d="M1.500 5 L4.500 2 L7.500 5 M1.500 9 L4.500 6 L7.500 9"/><path d="M1.500 184 L4.500 181 L7.500 184 M1.500 188 L4.500 185 L7.500 188"/><path d="M1.500 274 L4.500 271 L7.500 274 M1.500 278 L4.500 275 L7.500 278"/></svg>
<div class="abs" style="left:216px;top:305px;width:1px;height:288px;border-left:1px dotted #9a9a9a"></div>
<!-- prop scrollbar -->
<div class="abs" style="left:218px;top:287px;width:16px;height:306px;background:#f0f0f0"></div>
<div class="abs" style="left:218px;top:304px;width:15px;height:152px;border:1px solid #979797;border-radius:2px;background:linear-gradient(90deg,#f4f4f4 0,#e4e4e4 45%,#cfcfcf 55%,#dcdcdc 100%)"></div>
<svg class="abs" style="left:218px;top:287px" width="16" height="306" viewBox="0 0 16 306"><path d="M4.500 10.500 h7 l-3.500-4z" fill="#444"/><path d="M4.500 296 h7 l-3.500 4z" fill="#444"/><path d="M5 89.500 h6 M5 91.500 h6 M5 93.500 h6 M5 95.500 h6" stroke="#555" stroke-width="1"/></svg>
<!-- help + apply -->
<div class="tr" style="left:7px;top:598px;color:#1a62c0;text-decoration:underline">Properties help</div>
<div class="abs" style="left:159px;top:596px;width:73px;height:21px;border:1px solid #b8b8b8;border-radius:3px;background:#f4f4f4;text-align:center;line-height:20px;color:#8c8c8c">Apply</div>
<!-- project browser frame -->
<div class="abs" style="left:0;top:628px;width:239px;height:218px;background:#dde7f2;border:1px solid #333;border-top:2px solid #6a6a6a;border-bottom:none"></div>
<div class="ph" style="top:630px;height:21px"></div>
<div class="pht" style="top:634px;letter-spacing:-0.350px">PISANA - Project Browser</div>
<svg class="abs" style="left:221px;top:635px" width="13" height="13" viewBox="0 0 13 13"><rect x="0.500" y="0.500" width="12" height="12" rx="2" fill="#c9d8ea" stroke="#7b8ca6"/><path d="M4.300 4.300 L8.700 8.700 M8.700 4.300 L4.300 8.700" stroke="#3a4350" stroke-width="3.200" stroke-linecap="round"/><path d="M4.300 4.300 L8.700 8.700 M8.700 4.300 L4.300 8.700" stroke="#fff" stroke-width="1.400" stroke-linecap="round"/></svg>
<div class="abs" style="left:3px;top:651px;width:233px;height:193px;background:#fff;border-top:2px solid #6a6a6a;border-left:2px solid #6a6a6a;border-right:1px solid #fff;border-bottom:1px solid #fff;overflow:hidden"></div>
<!-- tree lines -->
<svg class="abs" style="left:5px;top:653px" width="214" height="190" viewBox="5 653 214 190" fill="none" stroke="#8f8f8f" stroke-width="1" stroke-dasharray="1 1" shape-rendering="crispEdges">
 <path d="M13.500 653 V843 M33.500 653 V676 M33.500 688 V712 M53.500 653 V663 M53.500 690 V699 M53.500 726 V789"/>
 <path d="M54 662.500 H67 M39 680.500 H48 M54 698.500 H67 M39 716.500 H48 M54 734.500 H67 M54 752.500 H67 M54 770.500 H67 M54 788.500 H67 M14 806.500 H23 M14 824.500 H23"/>
</svg>
<svg class="abs" style="left:28px;top:676px" width="11" height="48" viewBox="0 0 11 48"><rect x="0.500" y="0.500" width="9" height="9" rx="1" fill="#fff" stroke="#919191"/><path d="M2.500 5 h5" stroke="#2b4a8a" stroke-width="1"/><rect x="0.500" y="36.500" width="9" height="9" rx="1" fill="#fff" stroke="#919191"/><path d="M2.500 41 h5" stroke="#2b4a8a" stroke-width="1"/></svg>
<div class="tr" style="left:71px;top:654px">Level 2</div>
<div class="tr" style="left:51px;top:672px">3D Views</div>
<div class="abs" style="left:68px;top:689px;width:30px;height:18px;background:#e4e4e4"></div>
<div class="tr" style="left:71px;top:690px;font-weight:bold">{3D}</div>
<div class="tr" style="left:51px;top:708px">Elevations (Building Elevation)</div>
<div class="tr" style="left:71px;top:726px">East</div>
<div class="tr" style="left:71px;top:744px">North</div>
<div class="tr" style="left:71px;top:762px">South</div>
<div class="tr" style="left:71px;top:780px">West</div>
<div class="tr" style="left:47px;top:798px">Legends</div>
<div class="tr" style="left:47px;top:816px">Schedules/Quantities</div>
<div class="abs" style="left:47px;top:834px;width:120px;height:9px;overflow:hidden"><div class="tr" style="left:0;top:0">Sheets (all)</div></div>
<svg class="abs" style="left:25px;top:799px" width="17" height="44" viewBox="0 0 17 46" fill="none" stroke="#444" stroke-width="1.200"><rect x="0.700" y="0.700" width="15" height="13" rx="1" fill="#fff"/><path d="M0.700 2 H15.700" stroke-width="2"/><rect x="3" y="4.500" width="3" height="3" fill="#666" stroke="none"/><circle cx="4.500" cy="10.500" r="1.500" fill="#666" stroke="none"/><path d="M8 5 h2 M11 5 h3 M8 8 h5 M8 11 h2 M11 11 h3" stroke-width="1.100"/><rect x="0.700" y="18.700" width="15" height="11" rx="1" fill="#fff"/><path d="M0.700 20.500 H15.700" stroke-width="2.500"/><path d="M0.700 24 H15.700 M0.700 27 H15.700 M5.500 21 V29.500 M10.500 21 V29.500" stroke="#999" stroke-width="1"/><path d="M0.700 46 V36.700 H11 L15.700 41 V46 M11 36.700 V41 H15.700 M3 46 V40 H9" /></svg>
<!-- pb scrollbar -->
<div class="abs" style="left:219px;top:653px;width:16px;height:190px;background:#f0f0f0"></div>
<div class="abs" style="left:220px;top:724px;width:15px;height:73px;border:1px solid #979797;border-radius:2px;background:linear-gradient(90deg,#f4f4f4 0,#e4e4e4 45%,#cfcfcf 55%,#dcdcdc 100%)"></div>
<svg class="abs" style="left:219px;top:653px" width="16" height="190" viewBox="0 0 16 190"><path d="M4.500 11 h7 l-3.500-4z" fill="#444"/><path d="M4.500 181 h7 l-3.500 4z" fill="#444"/><path d="M5 104.500 h6 M5 106.500 h6 M5 108.500 h6 M5 110.500 h6" stroke="#555" stroke-width="1"/></svg>
<!-- splitter + view border -->
<div class="abs" style="left:241px;top:169px;width:4px;height:678px;background:#fff"></div>

<div class="abs" style="left:247px;top:169px;width:1175px;height:658px;background:#fff"></div>
<svg class="abs" style="left:247px;top:169px" width="1175" height="658" viewBox="247 169 1175 658" shape-rendering="auto">
<defs><clipPath id="tc"><polygon points="262.0,549.0 573.0,458.5 845.0,473.3 1008.0,483.0 1130.0,488.0 1228.0,494.5 1321.0,529.0 1369.0,568.0 1411.0,595.5 1337.0,611.0 1145.0,663.5 977.0,723.0 955.0,722.0 845.0,713.5 665.0,697.0 590.0,691.0 572.0,685.0 353.0,589.0"/></clipPath></defs>
<g clip-path="url(#tc)">
<polygon points="262.0,549.0 573.0,458.5 845.0,473.3 1008.0,483.0 1130.0,488.0 1228.0,494.5 1321.0,529.0 1369.0,568.0 1411.0,595.5 1337.0,611.0 1145.0,663.5 977.0,723.0 955.0,722.0 845.0,713.5 665.0,697.0 590.0,691.0 572.0,685.0 353.0,589.0" fill="#5a6f53" />
<polygon points="577.6,575.3 572.7,579.2 566.7,574.1" fill="#bf2e24" />
<polygon points="694.4,625.8 689.5,634.0 671.7,626.1" fill="#bf2e24" />
<polygon points="664.9,541.2 649.3,546.4 636.4,537.1" fill="#c8322a" />
<polygon points="651.7,592.7 630.7,600.7 622.2,590.9" fill="#c8322a" />
<polygon points="648.0,556.9 631.7,571.3 601.7,561.4" fill="#bf2e24" />
<polygon points="594.1,674.3 575.5,678.8 583.4,668.7" fill="#bf2e24" />
<polygon points="635.6,592.5 602.4,599.2 608.3,586.7" fill="#c8322a" />
<polygon points="593.4,674.4 563.2,684.3 579.1,669.2" fill="#bf2e24" />
<polygon points="471.7,632.0 464.9,635.2 465.5,630.1" fill="#bf2e24" />
<polygon points="633.1,601.1 598.9,611.0 613.3,599.2" fill="#c8322a" />
<polygon points="612.1,684.9 586.9,692.3 591.3,685.4" fill="#bf2e24" />
<polygon points="657.3,539.1 650.0,539.7 651.0,534.6" fill="#bf2e24" />
<polygon points="628.5,557.1 611.6,561.3 602.7,555.0" fill="#bf2e24" />
<polygon points="661.4,660.7 650.4,667.1 634.2,659.8" fill="#bf2e24" />
<polygon points="617.0,571.9 590.1,578.6 584.2,566.7" fill="#c8322a" />
<polygon points="620.2,678.9 598.5,687.7 593.4,667.9" fill="#bf2e24" />
<polygon points="658.7,572.0 620.8,573.0 634.5,566.3" fill="#bf2e24" />
<polygon points="603.2,596.7 577.5,598.5 583.1,592.1" fill="#bf2e24" />
<polygon points="628.4,610.8 603.2,614.7 591.0,603.2" fill="#bf2e24" />
<polygon points="674.5,523.4 639.0,526.6 656.3,514.2" fill="#bf2e24" />
<polygon points="638.1,613.1 624.8,618.4 617.3,610.7" fill="#bf2e24" />
<polygon points="583.8,615.6 552.2,619.9 563.8,606.6" fill="#bf2e24" />
<polygon points="659.5,606.1 636.3,607.3 639.3,601.5" fill="#c8322a" />
<polygon points="646.4,678.2 630.3,680.1 632.4,673.8" fill="#c8322a" />
<polygon points="691.3,538.0 666.9,545.5 659.2,536.2" fill="#c8322a" />
<polygon points="533.3,626.9 510.5,629.3 508.0,624.7" fill="#bf2e24" />
<polygon points="659.5,558.2 648.8,559.2 649.8,553.4" fill="#bf2e24" />
<polygon points="600.1,544.7 591.9,556.1 587.8,548.0" fill="#bf2e24" />
<polygon points="517.0,649.6 510.1,655.2 497.2,649.5" fill="#bf2e24" />
<polygon points="626.7,634.8 603.2,636.2 596.5,627.5" fill="#bf2e24" />
<polygon points="635.3,538.0 602.5,541.5 621.3,528.7" fill="#bf2e24" />
<polygon points="667.7,669.2 653.9,677.6 646.4,668.7" fill="#c8322a" />
<polygon points="608.2,610.9 579.8,614.1 587.2,602.5" fill="#bf2e24" />
<polygon points="665.8,643.7 639.0,648.0 642.1,636.6" fill="#bf2e24" />
<polygon points="667.1,620.3 652.1,624.5 644.4,613.6" fill="#c8322a" />
<polygon points="587.9,626.8 563.4,631.7 571.4,620.2" fill="#bf2e24" />
<polygon points="578.5,651.4 561.0,651.5 567.3,643.3" fill="#c8322a" />
<polygon points="616.7,545.1 594.5,549.8 588.5,540.6" fill="#bf2e24" />
<polygon points="574.1,643.2 555.7,645.5 550.3,640.1" fill="#c8322a" />
<polygon points="565.8,660.1 538.5,667.2 543.4,657.4" fill="#bf2e24" />
<polygon points="599.7,624.9 585.8,630.9 577.1,625.9" fill="#bf2e24" />
<polygon points="670.0,534.6 647.8,538.1 659.2,521.1" fill="#c8322a" />
<polygon points="694.4,643.8 674.0,656.4 675.5,642.9" fill="#c8322a" />
<polygon points="710.1,680.5 675.7,683.2 668.8,670.2" fill="#c8322a" />
<polygon points="680.9,596.1 660.8,606.7 657.7,590.1" fill="#c8322a" />
<polygon points="614.2,562.3 605.5,573.5 598.1,561.0" fill="#c8322a" />
<polygon points="680.1,649.0 667.7,653.2 655.0,645.2" fill="#bf2e24" />
<polygon points="636.9,604.7 602.9,615.7 607.6,601.8" fill="#bf2e24" />
<polygon points="658.1,652.7 617.8,665.7 622.7,653.0" fill="#bf2e24" />
<polygon points="714.3,533.6 690.2,538.8 681.0,525.7" fill="#bf2e24" />
<polygon points="687.2,626.6 675.3,633.0 667.1,629.3" fill="#bf2e24" />
<polygon points="666.5,550.4 650.4,557.0 640.7,548.9" fill="#bf2e24" />
<polygon points="615.6,680.4 606.6,685.9 601.8,678.7" fill="#bf2e24" />
<polygon points="606.7,675.5 584.6,678.6 581.7,673.2" fill="#c8322a" />
<polygon points="683.8,646.8 643.2,649.6 650.1,639.2" fill="#c8322a" />
<polygon points="660.9,691.2 655.4,701.7 644.0,689.6" fill="#c8322a" />
<polygon points="537.1,658.1 517.5,674.2 508.8,659.5" fill="#c8322a" />
<polygon points="653.2,649.5 650.1,656.4 645.4,650.6" fill="#c8322a" />
<polygon points="627.7,683.8 608.4,683.9 614.3,679.5" fill="#bf2e24" />
<polygon points="699.2,686.3 682.1,691.2 681.9,682.5" fill="#bf2e24" />
<polygon points="650.1,620.3 639.3,626.4 633.7,619.2" fill="#bf2e24" />
<polygon points="612.4,597.1 609.2,605.7 590.9,597.1" fill="#bf2e24" />
<polygon points="698.3,541.7 688.0,544.7 689.1,536.5" fill="#c8322a" />
<polygon points="532.9,645.8 521.4,650.8 520.4,645.6" fill="#bf2e24" />
<polygon points="671.5,626.3 633.1,642.5 629.7,630.8" fill="#bf2e24" />
<polygon points="659.7,543.1 646.9,547.3 645.2,543.4" fill="#bf2e24" />
<polygon points="602.4,546.3 592.1,554.8 588.8,548.2" fill="#c8322a" />
<polygon points="651.6,633.9 641.7,638.7 640.9,630.2" fill="#bf2e24" />
<polygon points="671.5,696.1 668.8,702.7 650.7,692.5" fill="#c8322a" />
<polygon points="591.4,572.4 576.0,583.3 566.1,569.6" fill="#bf2e24" />
<polygon points="687.3,531.5 675.4,536.6 682.2,522.7" fill="#bf2e24" />
<polygon points="601.5,629.5 585.4,631.4 589.7,624.8" fill="#bf2e24" />
<polygon points="661.5,542.0 653.8,545.9 647.9,537.5" fill="#bf2e24" />
<polygon points="682.7,666.1 657.7,675.4 665.4,659.1" fill="#c8322a" />
<polygon points="594.8,587.5 577.1,594.6 568.9,583.5" fill="#c8322a" />
<polygon points="663.9,658.4 649.8,666.1 649.7,658.8" fill="#bf2e24" />
<polygon points="648.1,603.6 638.9,608.7 638.7,601.0" fill="#bf2e24" />
<polygon points="692.3,537.3 665.4,541.9 680.0,532.8" fill="#c8322a" />
<polygon points="683.9,546.5 677.6,550.6 677.0,542.2" fill="#c8322a" />
<polygon points="625.6,576.5 600.0,588.2 592.9,568.8" fill="#c8322a" />
<polygon points="602.2,571.2 587.3,586.0 567.6,571.0" fill="#bf2e24" />
<polygon points="694.3,675.8 669.0,682.4 674.4,673.2" fill="#c8322a" />
<polygon points="591.9,619.2 579.2,620.9 580.5,617.7" fill="#bf2e24" />
<polygon points="666.1,677.3 645.6,681.1 641.9,674.9" fill="#bf2e24" />
<polygon points="694.0,534.9 678.5,536.8 678.5,532.4" fill="#bf2e24" />
<polygon points="563.7,610.9 551.8,613.0 555.8,605.5" fill="#bf2e24" />
<polygon points="650.6,637.5 619.4,648.5 625.0,633.1" fill="#bf2e24" />
<polygon points="689.1,674.9 676.2,678.7 671.9,674.7" fill="#bf2e24" />
<polygon points="677.6,572.0 655.9,573.6 663.1,564.8" fill="#bf2e24" />
<polygon points="708.9,552.2 678.2,556.9 677.0,548.7" fill="#bf2e24" />
<polygon points="685.4,569.5 678.4,577.4 677.0,571.4" fill="#bf2e24" />
<polygon points="661.5,547.2 617.7,553.5 623.6,540.2" fill="#bf2e24" />
<polygon points="670.5,663.3 655.9,666.1 657.6,656.2" fill="#c8322a" />
<polygon points="692.5,650.4 668.9,656.4 669.5,649.6" fill="#c8322a" />
<polygon points="630.2,608.1 617.0,612.0 611.6,605.7" fill="#bf2e24" />
<polygon points="571.1,657.2 558.5,664.0 554.9,656.6" fill="#bf2e24" />
<polygon points="691.7,654.4 677.9,656.2 688.4,645.3" fill="#bf2e24" />
<polygon points="683.6,553.8 661.3,556.3 661.4,549.2" fill="#c8322a" />
<polygon points="616.2,649.0 607.7,652.0 605.7,645.3" fill="#bf2e24" />
<polygon points="523.8,653.6 484.1,657.0 489.1,645.7" fill="#bf2e24" />
<polygon points="706.9,535.6 699.3,545.1 688.7,537.0" fill="#bf2e24" />
<polygon points="665.7,590.6 654.3,594.9 654.4,588.2" fill="#c8322a" />
<polygon points="634.6,622.0 601.4,622.2 614.9,613.6" fill="#bf2e24" />
<polygon points="610.5,591.7 591.6,597.5 598.4,590.2" fill="#c8322a" />
<polygon points="672.0,609.8 658.2,615.0 663.0,601.1" fill="#c8322a" />
<polygon points="922.7,713.2 909.1,719.0 903.9,710.6" fill="#bf2e24" />
<polygon points="797.3,690.2 776.7,691.7 786.8,685.9" fill="#c8322a" />
<polygon points="773.5,648.1 767.5,650.4 763.4,647.4" fill="#bf2e24" />
<polygon points="717.7,698.4 708.7,700.7 708.8,693.7" fill="#c8322a" />
<polygon points="778.7,629.1 766.2,632.4 769.0,625.4" fill="#bf2e24" />
<polygon points="721.0,669.8 707.3,671.5 711.3,667.0" fill="#c8322a" />
<polygon points="744.5,623.9 725.0,631.8 727.0,622.5" fill="#bf2e24" />
<polygon points="895.3,707.8 870.0,714.2 873.6,702.1" fill="#bf2e24" />
<polygon points="737.0,650.8 711.5,655.5 715.9,648.6" fill="#bf2e24" />
<polygon points="868.3,678.7 853.0,687.8 846.0,678.0" fill="#bf2e24" />
<polygon points="717.3,687.6 694.1,692.5 693.8,685.1" fill="#bf2e24" />
<polygon points="796.9,704.7 786.0,708.7 780.6,702.2" fill="#c8322a" />
<polygon points="781.8,699.5 765.0,703.4 771.5,697.7" fill="#c8322a" />
<polygon points="842.5,665.6 829.6,668.4 823.2,665.8" fill="#bf2e24" />
<polygon points="924.9,712.7 907.1,715.3 901.9,708.7" fill="#c8322a" />
<polygon points="866.4,713.1 850.8,716.3 850.7,709.3" fill="#bf2e24" />
<polygon points="813.5,673.7 794.9,679.1 794.7,668.3" fill="#bf2e24" />
<polygon points="733.6,657.2 719.0,659.3 722.3,653.9" fill="#bf2e24" />
<polygon points="882.3,686.2 864.3,687.8 861.1,683.4" fill="#bf2e24" />
<polygon points="724.9,638.3 716.7,642.5 704.3,634.3" fill="#bf2e24" />
<polygon points="744.6,698.1 729.9,700.0 730.3,694.1" fill="#bf2e24" />
<polygon points="899.2,703.4 886.4,703.4 884.2,697.0" fill="#c8322a" />
<polygon points="724.5,515.2 711.6,521.8 696.3,515.1" fill="#bf2e24" />
<polygon points="756.4,529.7 739.6,534.4 740.2,523.9" fill="#bf2e24" />
<polygon points="722.0,538.6 705.2,546.9 706.7,538.9" fill="#c8322a" />
<polygon points="757.6,526.8 749.6,533.1 744.3,524.6" fill="#c8322a" />
<polygon points="1118.1,653.7 1103.2,658.2 1097.4,650.5" fill="#bf2e24" />
<polygon points="1192.6,610.0 1169.2,612.8 1180.6,606.4" fill="#bf2e24" />
<polygon points="1152.6,543.5 1140.2,546.3 1144.1,540.2" fill="#bf2e24" />
<polygon points="1133.1,569.3 1121.8,569.8 1123.0,565.5" fill="#bf2e24" />
<polygon points="1052.5,575.5 1039.1,577.4 1041.4,566.0" fill="#c8322a" />
<polygon points="1249.2,574.8 1234.5,580.9 1233.5,572.6" fill="#bf2e24" />
<polygon points="1326.8,594.7 1300.6,606.5 1292.6,588.9" fill="#c8322a" />
<polygon points="1153.8,542.8 1146.1,545.3 1144.6,539.2" fill="#bf2e24" />
<polygon points="1256.6,607.8 1247.1,610.8 1249.8,605.0" fill="#bf2e24" />
<polygon points="1120.8,550.6 1101.7,559.2 1108.5,547.7" fill="#c8322a" />
<polygon points="1080.4,629.9 1065.5,640.7 1056.8,628.3" fill="#bf2e24" />
<polygon points="1242.5,593.2 1217.5,597.1 1220.7,591.8" fill="#c8322a" />
<polygon points="1106.4,610.1 1098.0,612.6 1088.5,609.5" fill="#c8322a" />
<polygon points="1079.5,620.3 1066.0,628.5 1063.5,614.5" fill="#bf2e24" />
<polygon points="1289.3,582.1 1262.6,583.9 1280.7,574.9" fill="#bf2e24" />
<polygon points="1060.3,626.5 1032.6,627.5 1036.0,622.0" fill="#c8322a" />
<polygon points="1190.0,541.0 1166.7,544.6 1164.6,535.5" fill="#bf2e24" />
<polygon points="1062.8,495.4 1059.9,499.8 1052.2,494.3" fill="#bf2e24" />
<polygon points="1155.0,513.1 1148.1,518.0 1140.6,510.1" fill="#c8322a" />
<polygon points="1046.4,488.5 1020.4,497.9 1014.7,481.9" fill="#bf2e24" />
<polygon points="1226.3,510.1 1198.7,511.5 1208.9,505.0" fill="#c8322a" />
<polygon points="574.0,459.0 855.0,473.5 1008.0,483.0 990.0,489.0 855.0,490.0 760.0,494.0 727.0,492.0 679.0,505.5 657.0,497.0 603.0,476.0 580.0,470.0" fill="#bf2e24" />
<polygon points="283.0,547.0 563.0,466.5 570.0,465.0 580.0,476.0 603.0,476.0 657.0,497.0 681.0,507.0 600.0,530.0 540.0,560.0 500.0,590.0 425.0,606.0 349.0,583.0" fill="#d63c3c" />
<polygon points="568.0,468.0 574.0,460.0 603.0,475.7 579.0,475.7" fill="#5a6f53" />
<polygon points="263.0,549.0 286.0,548.5 276.0,545.5" fill="#bf2e24" />
<polygon points="509.2,474.7 561.1,473.2 532.3,479.0" fill="#bf2e24" />
<polygon points="351.8,587.9 393.6,590.2 421.1,607.5 376.3,596.0" fill="#bf2e24" />
<polygon points="978.3,550.0 991.7,560.0 1015.0,583.3 978.3,590.0" fill="#bf2e24" />
<polygon points="1008.3,526.7 1031.7,521.7 1051.7,528.3 1018.3,536.7" fill="#bf2e24" />
<polygon points="1031.7,576.7 1058.3,581.7 1045.0,593.3 1030.0,588.3" fill="#bf2e24" />
<polygon points="1105.0,510.0 1121.7,508.3 1118.3,516.7" fill="#bf2e24" />
<polygon points="955.0,596.7 985.0,583.3 1018.3,576.7 1026.7,583.3 988.3,601.7 965.0,606.7" fill="#bf2e24" />
<polygon points="746.0,528.0 752.0,507.0 800.0,508.0 940.0,509.5 943.0,517.0 945.0,553.0 880.6,564.7 875.0,567.5" fill="#bf2e24" />
<polygon points="816.0,545.0 938.6,519.0 943.0,518.0 944.0,524.0 830.0,549.0" fill="#5a6f53" />
<polygon points="941.7,503.3 1005.0,486.7 1011.7,491.7 978.3,506.7 945.0,515.0" fill="#bf2e24" />
<polygon points="740.0,494.4 785.8,494.4 877.5,491.4 960.0,492.9 960.0,489.6 877.5,488.0 785.8,492.9 740.0,492.9" fill="#bf2e24" />
<polygon points="1034.0,486.0 1080.0,496.0 1066.0,489.0" fill="#bf2e24" />
<polygon points="1058.0,514.0 1102.0,498.0 1086.0,495.6" fill="#bf2e24" />
<polygon points="1102.0,498.0 1110.0,510.0 1120.0,509.0" fill="#bf2e24" />
<polygon points="1084.0,526.0 1114.0,518.0 1110.0,514.0" fill="#bf2e24" />
<polygon points="1115.0,518.0 1167.0,518.0 1167.0,535.0" fill="#bf2e24" />
<polygon points="1108.0,549.0 1180.0,538.0 1164.0,552.0 1130.0,553.0" fill="#bf2e24" />
<polygon points="1118.0,489.0 1142.0,491.0 1130.0,494.0" fill="#bf2e24" />
<polygon points="1010.0,526.0 1036.0,522.0 1048.0,530.0 1016.0,534.0" fill="#bf2e24" />
<polygon points="1108.0,546.0 1126.0,556.0 1118.0,559.0" fill="#bf2e24" />
<polygon points="1150.0,562.0 1178.0,560.0 1190.0,568.0 1162.0,570.0" fill="#bf2e24" />
<polygon points="990.0,560.0 1012.0,580.0 1016.0,588.0 990.0,586.0" fill="#bf2e24" />
<polygon points="1030.0,582.0 1060.0,582.0 1050.0,608.0 1028.0,592.0" fill="#bf2e24" />
<polygon points="1102.0,562.0 1154.0,559.0 1150.0,562.0 1110.0,565.0" fill="#bf2e24" />
<polygon points="1181.7,609.2 1240.0,607.1 1240.0,613.3 1198.3,615.4" fill="#bf2e24" />
<polygon points="1131.7,632.1 1165.0,625.8 1198.3,634.2 1140.0,638.3" fill="#bf2e24" />
<polygon points="977.5,550.8 1006.7,588.3 977.5,575.8" fill="#bf2e24" />
<polygon points="748.0,529.0 845.0,556.0 920.0,581.6 958.0,597.0 995.0,622.0 988.0,627.0 932.0,596.0 845.0,573.0 748.0,546.0" fill="#b31f1f" />
<polygon points="698.0,563.0 748.0,546.0 845.0,573.0 932.0,594.0 988.0,627.0 955.0,632.0 935.0,643.0 888.0,663.0 867.0,672.0 780.0,624.0 685.0,597.0" fill="#d63c3c" />
<polygon points="988.3,623.3 1031.7,630.0 1091.7,650.0 1098.3,658.3 1078.3,671.7 1075.0,666.7 1085.0,655.0 988.3,628.3" fill="#c8322a" />
<polygon points="1078.3,671.7 1098.3,658.3 1108.3,663.3 1085.0,680.0 1041.7,690.0 1038.3,683.3" fill="#bf2e24" />
<polygon points="1233.3,500.0 1318.9,530.0 1292.2,541.1 1223.3,544.4" fill="#bf2e24" />
<polygon points="1156.7,557.8 1176.7,540.0 1223.3,544.4 1236.7,548.9 1185.6,566.7" fill="#bf2e24" />
<polygon points="1130.0,518.9 1166.7,518.2 1166.7,533.3 1130.0,526.7" fill="#bf2e24" />
<polygon points="1238.9,565.6 1285.6,553.3 1323.3,578.9 1272.2,576.7 1241.1,573.3" fill="#bf2e24" />
<polygon points="1185.6,566.7 1318.9,535.6 1367.8,568.9 1392.2,587.8 1356.7,596.7 1330.0,575.6 1323.3,578.9 1287.8,552.2 1203.3,573.8" fill="#d63c3c" />
<polygon points="1392.2,587.8 1411.1,595.1 1352.2,604.4 1356.7,596.7" fill="#bf2e24" />
<polygon points="1004.0,619.0 1058.0,600.0 1145.0,576.0 1186.0,566.0 1203.0,574.0 1145.0,594.0 1030.0,630.0" fill="#c8322a" />
<polygon points="1010.0,621.0 1181.0,569.0 1199.0,574.5 1022.0,628.0" fill="#e9dcda" />
<polygon points="1060.0,604.0 1140.0,580.0 1150.0,584.0 1075.0,608.0" fill="#ea5a58" />
<polygon points="1120.0,587.0 1181.0,569.0 1190.0,572.0 1130.0,590.0" fill="#ec6a66" />
<polygon points="665.0,693.0 845.0,709.0 955.0,718.0 980.0,718.0 1145.0,660.0 1337.0,608.0 1411.0,595.5 1337.0,612.0 1145.0,665.0 977.0,725.0 845.0,715.0 665.0,699.0" fill="#c8322a" />
<defs><radialGradient id="vs"><stop offset="0" stop-color="#1e2b1e" stop-opacity="0.330"/><stop offset="1" stop-color="#1e2b1e" stop-opacity="0"/></radialGradient></defs>
<ellipse cx="1016" cy="510" rx="30" ry="16" fill="url(#vs)" transform="rotate(35 1018 512)"/>
<ellipse cx="1082" cy="540" rx="28" ry="12" fill="url(#vs)" transform="rotate(30 1082 540)"/>
<polygon points="425.4,606.0 439.8,590.0 463.0,567.0 494.7,548.3 526.5,538.2 543.8,526.6 561.0,509.0 588.0,493.0 658.0,495.0 681.7,508.3 561.7,543.3 593.0,546.7 593.0,555.0 570.0,573.0 568.0,601.7 561.0,604.6 476.0,626.3" fill="#8c8c8c" />
<polygon points="561.7,543.3 681.7,508.3 679.0,512.0 595.0,540.0 593.0,546.7" fill="#ababab" />
<polygon points="593.0,555.0 570.0,573.0 568.0,601.7 572.0,611.0 574.0,580.0 597.0,561.0" fill="#a8a8a8" />
<polygon points="476.0,626.3 561.0,604.6 568.0,601.7 572.0,611.0 563.0,614.0 476.0,636.4" fill="#a6a6a6" />
<polygon points="434.0,597.0 476.0,626.3 476.0,636.4 451.0,615.0" fill="#444" />
<polygon points="888.3,663.3 935.0,643.3 955.0,631.7 988.3,628.3 1085.0,655.0 1075.0,666.7 1038.3,676.7 1036.7,683.3 978.3,693.3" fill="#8a8a8a" />
<polygon points="888.3,663.3 978.3,693.3 975.0,708.3 955.0,703.3 925.0,696.7 905.0,676.7" fill="#3e3e3e" />
<polygon points="978.3,693.3 1036.7,683.3 1035.7,687.3 977.7,698.3" fill="#b0b0b0" />
<polyline points="569.8,460.2 565.5,470.3 506.3,499.2 486.0,518.0 484.6,529.5 457.2,536.8 351.8,587.3" fill="none" stroke="#111" stroke-width="1"/>
<polyline points="575.0,474.7 543.8,493.4 514.9,518.0 500.5,535.3 480.3,541.1 434.1,564.2 390.7,597.4 386.4,603.2" fill="none" stroke="#111" stroke-width="1"/>
<polyline points="575.0,483.3 555.4,497.8 532.3,526.6 509.2,541.1 474.5,558.4 439.8,584.4 422.5,607.5" fill="none" stroke="#111" stroke-width="1"/>
<polyline points="555.0,480.0 578.3,476.7 638.3,486.7 695.0,498.3 728.3,501.7 741.7,523.3" fill="none" stroke="#111" stroke-width="1"/>
<polyline points="573.3,460.0 581.7,473.3 641.7,483.3 728.3,490.0 755.0,503.3" fill="none" stroke="#111" stroke-width="1"/>
<polyline points="575.0,613.3 543.8,624.8 514.9,630.6 506.3,642.2 474.5,639.3" fill="none" stroke="#111" stroke-width="1"/>
<polyline points="575.0,624.8 549.6,636.4 532.3,647.9 523.6,659.5 509.2,656.6" fill="none" stroke="#111" stroke-width="1"/>
<polyline points="575.0,636.4 558.2,647.9 543.8,665.3 540.9,671.0" fill="none" stroke="#111" stroke-width="1"/>
<polyline points="575.0,650.8 561.1,668.2 558.2,679.7" fill="none" stroke="#111" stroke-width="1"/>
<polyline points="462.9,610.4 457.2,624.8 442.7,619.1" fill="none" stroke="#111" stroke-width="1"/>
<polyline points="434.1,610.4 428.3,616.2 419.6,613.3" fill="none" stroke="#111" stroke-width="1"/>
<polyline points="474.5,640.7 454.3,631.2 439.8,622.5 416.7,611.0 387.9,602.3 364.7,591.6" fill="none" stroke="#111" stroke-width="1"/>
<polyline points="679.4,508.3 726.7,515.3 719.7,519.4 696.1,519.4 698.9,525.0 682.2,533.3 673.9,545.8" fill="none" stroke="#111" stroke-width="1"/>
<polyline points="637.8,527.1 678.1,529.2 685.0,533.3 698.9,525.7" fill="none" stroke="#111" stroke-width="1"/>
<polyline points="698.9,533.3 700.3,538.9 712.8,544.4 740.6,527.8 747.5,526.4" fill="none" stroke="#111" stroke-width="1"/>
<polyline points="726.7,502.8 737.8,509.7 746.1,525.0 760.0,533.3" fill="none" stroke="#111" stroke-width="1"/>
<polyline points="732.2,491.7 750.3,497.2 760.0,508.3" fill="none" stroke="#111" stroke-width="1"/>
<polyline points="573.9,544.4 615.6,540.3 651.7,536.1 657.2,545.8 668.3,547.2" fill="none" stroke="#111" stroke-width="1"/>
<polyline points="555.0,636.7 568.3,626.7 605.0,621.7 638.3,613.3 655.0,606.7 658.3,586.7 668.3,573.3 671.7,550.0 681.7,536.7 701.7,523.3 698.3,518.3 721.7,515.0 728.3,501.7" fill="none" stroke="#111" stroke-width="1"/>
<polyline points="555.0,653.3 565.0,643.3 611.7,636.7 641.7,626.7 658.3,613.3 665.0,590.0 671.7,570.0 675.0,553.3 686.7,540.0 701.7,531.7" fill="none" stroke="#111" stroke-width="1"/>
<polyline points="555.0,673.3 575.0,660.0 621.7,653.3 651.7,640.0 661.7,626.7 670.0,600.0 675.0,576.7 681.7,556.7 695.0,546.7" fill="none" stroke="#111" stroke-width="1"/>
<polyline points="575.0,686.7 591.7,673.3 625.0,670.0 655.0,656.7 666.7,640.0 673.3,606.7 680.0,583.3 688.3,563.3 698.3,563.3" fill="none" stroke="#111" stroke-width="1"/>
<polyline points="621.7,683.3 631.7,670.0 661.7,666.7 671.7,646.7 678.3,613.3 685.0,590.0 691.7,573.3" fill="none" stroke="#111" stroke-width="1"/>
<polyline points="665.0,696.7 668.3,673.3 676.7,653.3 683.3,620.0 690.0,596.7 698.3,573.3 705.0,586.7 715.0,606.7" fill="none" stroke="#111" stroke-width="1"/>
<polyline points="675.0,698.3 680.0,673.3 686.7,656.7 688.3,626.7 695.0,600.0 701.7,583.3" fill="none" stroke="#111" stroke-width="1"/>
<polyline points="685.0,700.0 688.3,676.7 695.0,660.0 693.3,633.3 700.0,606.7 711.7,613.3 728.3,636.7 725.0,646.7 715.0,653.3" fill="none" stroke="#111" stroke-width="1"/>
<polyline points="695.0,701.7 698.3,678.3 701.7,663.3 698.3,640.0 705.0,626.7 718.3,640.0" fill="none" stroke="#111" stroke-width="1"/>
<polyline points="555.0,586.7 575.0,583.3 605.0,573.3 641.7,566.7 655.0,550.0 668.3,543.3" fill="none" stroke="#111" stroke-width="1"/>
<polyline points="555.0,573.3 588.3,566.7 621.7,556.7 648.3,540.0 665.0,541.7" fill="none" stroke="#111" stroke-width="1"/>
<polyline points="565.0,613.3 595.0,606.7 631.7,596.7 651.7,583.3 655.0,566.7" fill="none" stroke="#111" stroke-width="1"/>
<polyline points="941.7,516.7 988.3,505.0 1011.7,486.7 1025.0,500.0 1031.7,510.0 1018.3,520.0 978.3,546.7 955.0,583.3 978.3,596.7" fill="none" stroke="#111" stroke-width="1"/>
<polyline points="978.3,495.0 1005.0,485.0 1018.3,496.7 1038.3,513.3 1078.3,530.0 1095.0,546.7 1085.0,556.7 1031.7,576.7 1058.3,593.3 1051.7,626.7 1061.7,650.0 1098.3,658.3" fill="none" stroke="#111" stroke-width="1"/>
<polyline points="1011.7,491.7 1031.7,503.3 1045.0,516.7 1078.3,525.0 1091.7,540.0 1095.0,556.7 1071.7,563.3 1085.0,596.7 1105.0,610.0 1111.7,650.0 1098.3,663.3" fill="none" stroke="#111" stroke-width="1"/>
<polyline points="1025.0,493.3 1051.7,510.0 1085.0,526.7 1111.7,550.0 1125.0,583.3 1131.7,636.7 1135.0,663.3" fill="none" stroke="#111" stroke-width="1"/>
<polyline points="865.0,671.7 888.3,663.3" fill="none" stroke="#111" stroke-width="1"/>
<polyline points="1005.0,695.0 1011.7,706.7 1025.0,703.3 1018.3,690.0" fill="none" stroke="#111" stroke-width="1"/>
<polyline points="991.7,700.0 1001.7,713.3 1018.3,708.3" fill="none" stroke="#111" stroke-width="1"/>
<polyline points="1038.3,683.3 1038.3,696.7 1061.7,690.0 1055.0,676.7 1075.0,666.7" fill="none" stroke="#111" stroke-width="1"/>
<polyline points="1091.7,650.0 1118.3,670.0 1145.0,663.3" fill="none" stroke="#111" stroke-width="1"/>
<polyline points="1045.0,516.7 1078.3,510.0 1118.3,516.7 1145.0,526.7" fill="none" stroke="#111" stroke-width="1"/>
<polyline points="1058.3,593.3 1098.3,606.7 1121.7,630.0 1131.7,636.7" fill="none" stroke="#111" stroke-width="1"/>
<polyline points="740.0,492.9 749.2,496.0 754.5,505.9 804.2,543.3 814.9,544.9" fill="none" stroke="#111" stroke-width="1"/>
<polyline points="749.2,496.0 796.5,499.8 801.1,508.2 845.4,538.8 877.5,564.7 847.0,573.9 808.8,573.9 782.8,555.6 762.9,547.9 744.6,531.1" fill="none" stroke="#111" stroke-width="1"/>
<polyline points="796.5,499.8 845.4,505.1 847.0,511.3 912.7,558.6 909.6,577.0" fill="none" stroke="#111" stroke-width="1"/>
<polyline points="845.4,505.1 893.6,510.5 894.3,514.3 944.7,554.0 943.2,561.7 926.4,580.0" fill="none" stroke="#111" stroke-width="1"/>
<polyline points="893.6,510.5 940.2,517.4 960.0,531.1 978.3,543.3 969.2,555.6" fill="none" stroke="#111" stroke-width="1"/>
<polyline points="796.5,499.8 862.2,496.7 960.0,496.0" fill="none" stroke="#111" stroke-width="1"/>
<polyline points="845.4,505.1 877.5,501.3 960.0,499.8" fill="none" stroke="#111" stroke-width="1"/>
<polyline points="893.6,510.5 923.3,505.9 960.0,504.4" fill="none" stroke="#111" stroke-width="1"/>
<polyline points="940.2,517.4 960.0,512.8" fill="none" stroke="#111" stroke-width="1"/>
<polyline points="713.8,556.7 724.4,565.6 745.8,574.4 768.9,589.6 795.6,597.6 841.8,601.1 880.9,585.1 920.0,574.4" fill="none" stroke="#111" stroke-width="1"/>
<polyline points="697.8,563.8 712.9,586.9 754.7,608.2 770.7,609.1 777.8,624.2 772.4,630.4 795.6,624.2 840.0,608.2 920.0,590.4 931.6,593.3" fill="none" stroke="#111" stroke-width="1"/>
<polyline points="688.9,574.4 703.1,601.1 715.6,606.4 731.6,618.9 748.4,621.6 747.6,637.6 786.7,634.9 818.7,629.6 857.8,615.3 920.0,601.1 944.9,606.6" fill="none" stroke="#111" stroke-width="1"/>
<polyline points="681.8,583.3 697.8,613.6 703.1,631.3 728.0,636.7 724.4,645.6 740.4,650.9 786.7,643.8 825.8,636.7 868.4,622.4 920.0,610.0 961.6,610.0" fill="none" stroke="#111" stroke-width="1"/>
<polyline points="680.0,604.7 690.7,629.6 710.2,645.6 718.2,660.7 768.9,654.4 813.3,652.7 848.9,652.7 875.6,636.7 920.0,622.4 987.9,626.7" fill="none" stroke="#111" stroke-width="1"/>
<polyline points="680.0,622.4 687.1,643.8 710.2,666.9 768.9,665.1 822.2,670.4 864.9,672.2 888.0,661.6" fill="none" stroke="#111" stroke-width="1"/>
<polyline points="680.0,636.7 685.3,654.4 704.9,672.2 768.9,672.2 880.9,681.1 911.1,696.2 955.0,713.1 976.7,723.4" fill="none" stroke="#111" stroke-width="1"/>
<polyline points="680.0,650.9 683.6,665.1 699.6,677.6 768.9,677.6 884.4,686.4 908.3,701.2 958.4,718.3" fill="none" stroke="#111" stroke-width="1"/>
<polyline points="680.0,665.1 694.2,682.9 768.9,682.9 875.6,690.0 904.9,706.0 955.0,721.6" fill="none" stroke="#111" stroke-width="1"/>
<polyline points="724.4,690.0 768.9,688.2 857.8,695.3 928.9,716.7" fill="none" stroke="#111" stroke-width="1"/>
<polyline points="662.2,629.6 669.3,654.4 687.1,686.4 706.7,695.3" fill="none" stroke="#111" stroke-width="1"/>
<polyline points="653.3,626.0 660.4,658.0 676.4,690.0 694.2,700.7" fill="none" stroke="#111" stroke-width="1"/>
<polyline points="644.4,622.4 651.6,661.6 665.8,693.6" fill="none" stroke="#111" stroke-width="1"/>
<polyline points="635.6,618.9 641.8,665.1 655.1,695.3" fill="none" stroke="#111" stroke-width="1"/>
<polygon points="680.0,636.7 685.3,654.4 704.9,672.2 768.9,672.2 880.9,681.1 884.4,686.4 768.9,677.6 699.6,677.6 683.6,665.1 680.0,650.9" fill="#c8322a" />
<polygon points="694.2,682.9 768.9,682.9 875.6,690.0 904.9,706.0 857.8,695.3 768.9,688.2 724.4,690.0" fill="#c8322a" />
<polyline points="680.0,622.4 687.1,643.8 710.2,666.9 768.9,665.1 822.2,670.4 864.9,672.2 888.0,661.6" fill="none" stroke="#111" stroke-width="1"/>
<polyline points="680.0,636.7 685.3,654.4 704.9,672.2 768.9,672.2 880.9,681.1 911.1,696.2 955.0,713.1 976.7,723.4" fill="none" stroke="#111" stroke-width="1"/>
<polyline points="680.0,650.9 683.6,665.1 699.6,677.6 768.9,677.6 884.4,686.4 908.3,701.2 958.4,718.3" fill="none" stroke="#111" stroke-width="1"/>
<polyline points="680.0,665.1 694.2,682.9 768.9,682.9 875.6,690.0 904.9,706.0 955.0,721.6" fill="none" stroke="#111" stroke-width="1"/>
<polyline points="1130.0,493.3 1174.4,493.3 1233.3,498.9" fill="none" stroke="#111" stroke-width="1"/>
<polyline points="1130.0,524.4 1165.6,535.6 1223.3,544.4 1276.7,543.3 1318.9,530.0" fill="none" stroke="#111" stroke-width="1"/>
<polyline points="1130.0,548.9 1196.7,571.1 1234.4,587.8 1323.3,580.0 1330.0,575.6 1367.8,567.8" fill="none" stroke="#111" stroke-width="1"/>
<polyline points="1330.0,575.6 1330.0,598.9 1350.0,605.6" fill="none" stroke="#111" stroke-width="1"/>
<polyline points="1330.0,591.1 1343.3,602.2" fill="none" stroke="#111" stroke-width="1"/>
<polyline points="1130.0,586.7 1138.9,593.3 1158.9,626.7 1161.1,651.1 1158.9,660.0" fill="none" stroke="#111" stroke-width="1"/>
<polyline points="1174.4,584.4 1187.8,604.4 1190.0,628.9 1183.3,648.9" fill="none" stroke="#111" stroke-width="1"/>
<polyline points="1183.3,648.9 1214.4,642.2 1216.7,631.1 1245.6,611.1 1321.1,600.0 1336.7,611.1" fill="none" stroke="#111" stroke-width="1"/>
<polyline points="1130.0,635.6 1134.4,646.7 1132.2,660.0" fill="none" stroke="#111" stroke-width="1"/>
</g>
<polyline points="573.0,458.5 845.0,473.3 1008.0,483.0 1130.0,488.0 1228.0,494.5" fill="none" stroke="#111" stroke-width="1"/>
<polyline points="1411.0,595.5 1337.0,611.0 1145.0,663.5 977.0,723.0 955.0,722.0 845.0,713.5 665.0,697.0 600.0,692.0" fill="none" stroke="#111" stroke-width="1"/>
<polyline points="1228.0,494.5 1321.0,529.0 1369.0,568.0 1411.0,595.5" fill="none" stroke="#4a5a45" stroke-width="0.6"/>
<polyline points="262.0,549.0 573.0,458.5" fill="none" stroke="#4a5a45" stroke-width="0.6"/>
<polyline points="262.0,549.0 353.0,589.0 572.0,685.0 600.0,692.0" fill="none" stroke="#4a5a45" stroke-width="0.6"/>
<path d="M729.5 481.500 V497 L733 493.500 L736 500 L738.500 499 L735.500 493 H740.500Z" fill="#fff" stroke="#111" stroke-width="1"/>
<path d="M733.500 478.500 h5" stroke="#fff" stroke-width="1.500"/>
</svg>
<svg class="abs" style="left:1270px;top:230px" width="140" height="110" viewBox="1270 230 140 110">
<ellipse cx="1337" cy="295" rx="56" ry="26" fill="#f4f4f4"/>
<ellipse cx="1337" cy="293" rx="45" ry="20" fill="#fdfdfd" stroke="#e2e2e2" stroke-width="2"/>
<ellipse cx="1340" cy="299" rx="26" ry="8" fill="#ececec"/>
<path d="M1308.500 246.500 L1348 241.500 L1368.500 252 L1327.500 259.500Z" fill="#fafafa" stroke="#d8d8d8" stroke-dasharray="3 1.500"/>
<path d="M1308.500 246.500 L1327.500 259.500 L1328 302 L1310.500 285Z" fill="#f1f1f1" stroke="#d4d4d4" stroke-dasharray="3 1.500"/>
<path d="M1327.500 259.500 L1368.500 252 L1367.500 293 L1328 302Z" fill="#f7f7f7" stroke="#d4d4d4" stroke-dasharray="3 1.500"/>
<text x="1338" y="283" font-family="Liberation Sans" font-weight="bold" font-size="11" fill="#cfcfcf" transform="rotate(-8 1348 280)" textLength="20" lengthAdjust="spacingAndGlyphs">LEFT</text>
<text font-family="Liberation Sans" font-weight="bold" font-size="10" fill="#d6d6d6" transform="translate(1312 266) rotate(40) scale(0.550 1)" x="0" y="0">BACK</text>
<text x="1333" y="251" font-family="Liberation Sans" font-weight="bold" font-size="5" fill="#d8d8d8">TOP</text>
<text x="1374" y="288" font-family="Liberation Sans" font-weight="bold" font-size="10" fill="#d2d2d2" transform="rotate(60 1380 284)">S</text>
<text x="1356" y="322" font-family="Liberation Sans" font-weight="bold" font-size="12" fill="#d2d2d2" transform="rotate(25 1362 318)">W</text>
<text x="1279" y="308" font-family="Liberation Sans" font-weight="bold" font-size="11" fill="#d2d2d2" transform="rotate(-25 1284 304)">N</text>
</svg>

<!-- view frame -->
<div class="abs" style="left:246px;top:168px;width:1194px;height:1px;background:#6a6a6a"></div>
<div class="abs" style="left:246px;top:168px;width:1px;height:679px;background:#6a6a6a"></div>
<!-- right scrollbar -->
<div class="abs" style="left:1422px;top:169px;width:17px;height:658px;background:#f0f0f0"></div>
<div class="abs" style="left:1439px;top:169px;width:1px;height:678px;background:#8a8a8a"></div>
<div class="abs" style="left:1423px;top:490px;width:14px;height:15px;border:1px solid #8e8e8e;border-radius:2px;background:linear-gradient(90deg,#fafafa,#e2e2e2)"></div>
<svg class="abs" style="left:1422px;top:169px" width="17" height="658" viewBox="0 0 17 658"><path d="M4.500 11 h7 l-3.500-4z" fill="#444"/><path d="M4.500 646 h7 l-3.500 4z" fill="#444"/></svg>
<!-- mdi buttons -->
<svg class="abs" style="left:1366px;top:171px" width="54" height="14" viewBox="0 0 54 14" fill="none"><rect x="3.500" y="6.500" width="11" height="3.500" rx="0.500" fill="#fff" stroke="#444" stroke-width="1.100"/><rect x="21.500" y="4.500" width="8" height="8" rx="1" fill="#fff" stroke="#444" stroke-width="1.200"/><rect x="24.500" y="7.500" width="2.500" height="2.500" stroke="#444"/><path d="M24 4 V2 h8 v8 h-2" stroke="#444" stroke-width="1.200"/><path d="M41.500 3.500 L49 11 M49 3.500 L41.500 11" stroke="#333" stroke-width="3.400" stroke-linecap="round"/><path d="M41.500 3.500 L49 11 M49 3.500 L41.500 11" stroke="#fff" stroke-width="1.400" stroke-linecap="round"/></svg>
<!-- view control bar -->
<div class="abs" style="left:247px;top:827px;width:1192px;height:19px;background:#f0f0f0"></div>
<div class="t" style="left:271px;top:828px;line-height:16px;color:#222;letter-spacing:-0.400px">1 : 100</div>
<svg class="abs" style="left:320px;top:827px" width="200" height="19" viewBox="320 827 200 19" fill="none" stroke="#222" stroke-width="1">
 <defs><pattern id="chk" width="2" height="2" patternUnits="userSpaceOnUse"><g stroke="none"><rect width="2" height="2" fill="#fff"/><rect width="1" height="1" fill="#555"/><rect x="1" y="1" width="1" height="1" fill="#555"/></g></pattern></defs>
 <rect x="326.500" y="829.500" width="14" height="11" fill="url(#chk)" stroke="#333"/>
 <path d="M348.500 834.500 l4-3.500 h10 l-4 3.500z" fill="#e8f2fa" stroke="#7aa6cf"/><rect x="348.500" y="834.500" width="10" height="7" fill="#cfe3f5" stroke="#7aa6cf"/><path d="M358.500 834.500 l4-3.500 v7 l-4 3.500z" fill="#a9cbea" stroke="#7aa6cf"/>
 <circle cx="373.500" cy="834.500" r="3.500" fill="#ffe066" stroke="#c78a10"/><path d="M373.500 828 v2 M373.500 839 v2 M367 834.500 h2 M378 834.500 h2 M369 830 l1.500 1.500 M378 830 l-1.500 1.500 M369 839 l1.500-1.500" stroke="#c78a10"/><path d="M376.500 836.500 l5 5 M381.500 836.500 l-5 5" stroke="#d01818" stroke-width="1.800"/>
 <circle cx="396" cy="833.500" r="4" fill="#fff" stroke="#2b5f9e" stroke-width="1.300"/><path d="M390 840.500 h7" stroke="#222" stroke-width="1.500"/><path d="M398.500 836.500 l5 5 M403.500 836.500 l-5 5" stroke="#d01818" stroke-width="1.800"/>
 <path d="M410 832.500 l3 6 h7 l3-6 -3 1.500 h-7z M409.500 831 l2-1.500" stroke="#333"/><circle cx="421.500" cy="836" r="2.600" fill="#fff" stroke="#2b5f9e"/><path d="M420.500 839 h2 v2 h-2z" fill="#2b5f9e" stroke="none"/>
 <path d="M430 836.500 h3 M436.500 830.500 h9 v3 M434.500 833.500 h9 v7 h-9z" stroke="#2b5f9e" stroke-width="1.300"/><path d="M438 839.500 h5 M432.500 835 v6" stroke="#d01818" stroke-width="1.400"/>
 <path d="M451 836.500 h2 M455.500 833.500 h7 v7 h-7z M457.500 830.500 h7" stroke="#2b5f9e" stroke-width="1.300" stroke-dasharray="2 1"/><circle cx="465" cy="835.500" r="2.600" fill="#fff" stroke="#2b5f9e"/><path d="M464 838.500 h2 v2 h-2z" fill="#2b5f9e" stroke="none"/>
 <ellipse cx="477.500" cy="836.500" rx="3" ry="2.500" stroke="#222" stroke-width="1.100" fill="#fff"/><ellipse cx="485" cy="835.500" rx="3" ry="2.500" stroke="#222" stroke-width="1.100" fill="#fff"/><path d="M480.500 836 q1-1 1.500-0.500 M474.500 836 l-2.500-4 q0-1.500 2-1 M488 835 l1.500-3" stroke="#222" stroke-width="1.100"/>
 <circle cx="500.500" cy="833.500" r="2.800" fill="#fff" stroke="#2b5f9e" stroke-width="1.200"/><path d="M499.500 837 h2 v2.500 h-2z" fill="#2b5f9e" stroke="none"/>
</svg>
<div class="abs" style="left:514px;top:827px;width:906px;height:18px;background:#f0f0f0;border-top:1px solid #e3e3e3"></div>
<svg class="abs" style="left:514px;top:827px" width="926" height="19" viewBox="514 827 926 19"><path d="M524 831.500 v8 l-4-4z" fill="#444"/><path d="M1411 831.500 v8 l4-4z" fill="#444"/><path d="M1436 838 v1 M1433 841 h1 M1436 841 v1 M1430 844 h1 M1433 844 h1 M1436 844 h1" stroke="#aaa" stroke-width="2"/></svg>
<div class="abs" style="left:960px;top:828px;width:14px;height:16px;border:1px solid #8e8e8e;border-radius:2px;background:linear-gradient(180deg,#fafafa,#dcdcdc)"></div>
<!-- status bar -->
<div class="abs" style="left:0;top:846px;width:1440px;height:1px;background:#a0a0a0"></div>
<div class="abs" style="left:0;top:847px;width:1440px;height:23px;background:linear-gradient(180deg,#f4f4f4 0,#e9e9e9 100%)"></div>
<div class="t" style="left:3px;top:851px;line-height:16px;color:#1e1e1e;letter-spacing:-0.250px">Click to select, TAB for alternates, CTRL adds, SHIFT unselects.</div>
<svg class="abs" style="left:626px;top:849px" width="22" height="20" viewBox="0 0 22 20"><path d="M2.500 8 l4-2.500 4 2.500 v6 l-4 2.500 -4-2.500z" fill="#7ab0e0" stroke="#2b5f9e"/><path d="M7 3.500 l3-2 3 2 v3.500 l-3 2 -3-2z" fill="#79b85a" stroke="#33691e"/><path d="M14.500 4 q-2 1-1 3.500 l0.500 1 v8 h2.500 v-8 l0.500-1 q1-2.500-1-3.500 v3 h-2z" fill="#fff" stroke="#333" stroke-width="0.900"/></svg>
<div class="abs" style="left:651px;top:849px;width:155px;height:20px;background:#fff;border:1px solid #d8d8d8"></div>
<svg class="abs" style="left:793px;top:857px" width="9" height="5" viewBox="0 0 9 5"><path d="M0.500 0.500 h7 l-3.500 4z" fill="#777"/></svg>
<svg class="abs" style="left:813px;top:850px" width="46" height="18" viewBox="0 0 46 18" fill="none"><rect x="1.500" y="1.500" width="15" height="14" fill="#fff" stroke="#333" stroke-width="1.200"/><path d="M1.500 3 h15" stroke="#333" stroke-width="2.400"/><path d="M4 7.500 h2 M8 7.500 h6 M4 10.500 h2 M8 10.500 h6 M4 13.500 h2 M8 13.500 h6" stroke="#333" stroke-width="1.300"/><rect x="26.500" y="1.500" width="15" height="15" fill="#b8b8b8" stroke="#9a9a9a"/><path d="M29 11 h6 v-3 l4 4.500 -4 4 v-3 h-6z" fill="#e8e8e8"/><path d="M29 4 h4 v3" stroke="#e8e8e8" stroke-width="1.300"/></svg>
<div class="abs" style="left:863px;top:849px;width:156px;height:20px;background:#fff;border:1px solid #d8d8d8"></div>
<div class="t" style="left:866px;top:851px;line-height:16px;color:#7a7a7a">Main Model</div>
<svg class="abs" style="left:1006px;top:857px" width="9" height="5" viewBox="0 0 9 5"><path d="M0.500 0.500 h7 l-3.500 4z" fill="#888"/></svg>
<div class="abs" style="left:1245px;top:852px;width:13px;height:13px;border:1px solid #6a7a8a;background:#fff"></div>
<svg class="abs" style="left:1246px;top:853px" width="11" height="11" viewBox="0 0 11 11"><path d="M2 5.500 L4.500 8.500 L9 2" stroke="#2e8b1e" stroke-width="1.900" fill="none"/></svg>
<div class="t" style="left:1262px;top:851px;line-height:16px;color:#1e1e1e;letter-spacing:-0.100px">Press &amp; Drag</div>
<svg class="abs" style="left:1346px;top:851px" width="18" height="16" viewBox="0 0 18 16"><path d="M1.500 1.500 h14 l-5.500 6.500 v6 l-3-2 v-4z" fill="#eef3f8" stroke="#333" stroke-width="1.200" stroke-linejoin="round"/></svg>
<div class="t" style="left:1364px;top:853px;line-height:16px;font-size:11px;color:#1e1e1e">:0</div>
<!-- taskbar -->
<div class="abs" style="left:0;top:870px;width:1440px;height:30px;background:linear-gradient(180deg,#2a2c2e 0,#101112 12%,#050505 100%)"></div>
<style>.tb{position:absolute;top:871px;height:28px;width:43px;border:1px solid #6a6e72;border-radius:3px;background:linear-gradient(180deg,#55585c 0,#303336 45%,#0e0e0e 50%,#181818 100%)}</style>
<div class="tb" style="left:60px"></div><div class="tb" style="left:200px;width:40px"></div><div class="tb" style="left:198px;width:38px"></div><div class="tb" style="left:243px"></div><div class="tb" style="left:290px"></div>
<svg class="abs" style="left:0;top:864px" width="340" height="36" viewBox="0 864 340 36">
 <defs><radialGradient id="orb" cx="0.500" cy="0.350" r="0.700"><stop offset="0" stop-color="#b5e2fb"/><stop offset="0.550" stop-color="#2f82c8"/><stop offset="1" stop-color="#0c3a73"/></radialGradient></defs>
 <circle cx="27" cy="884" r="17.500" fill="url(#orb)" stroke="#143d6b" stroke-width="1.500"/>
 <path d="M18 878 q4-2.500 8-0.500 l-1.500 6.500 q-4-1.500-8 0.500z" fill="#e8632a"/><path d="M27.500 878 q4 1.500 8-0.500 l-1.500 6.500 q-4 2-8 0.500z" fill="#8fc440"/><path d="M16 886 q4-2.500 8-0.500 l-1.500 6.500 q-4-1.500-8 0.500z" fill="#3f9be0"/><path d="M25.500 886.500 q4 1.500 8-0.500 l-1.500 6.500 q-4 2-8 0.500z" fill="#f6c12e"/>
 <circle cx="81" cy="885" r="8" fill="#e8e03a"/><path d="M81 885 L73.500 882 A8 8 0 0 1 88.500 882Z" fill="#d93025"/><path d="M81 885 L73.500 882 A8 8 0 0 0 82 893Z" fill="#3aa84a"/><circle cx="81" cy="885" r="3.400" fill="#4a8de8" stroke="#fff" stroke-width="1"/>
 <path d="M119 879 h6 l1.500 1.500 h8.500 v11 h-16z" fill="#e8c65a" stroke="#a88a2a" stroke-width="0.800"/><path d="M119 884 h16 v7.500 h-16z" fill="#f6e08a"/><path d="M121 889 h12 v3 h-12z" fill="#7ab6e8"/>
 <rect x="164.500" y="876.500" width="16" height="16" rx="2" fill="#3b83d6" stroke="#cfe0f5" stroke-width="1"/><circle cx="172.500" cy="884.500" r="5.500" fill="#f08a1c" stroke="#fff" stroke-width="1"/><path d="M170.500 881.500 v6 l5-3z" fill="#fff"/>
 <path d="M207 878 h17 v14 h-17z" fill="#d8d8d8" stroke="#777" stroke-width="0.800"/><path d="M207 878 h17 v5 h-17z" fill="#444"/><text x="212" y="884" font-family="Liberation Sans" font-weight="bold" font-size="9" fill="#c03ac0">R</text><text x="218" y="891" font-family="Liberation Sans" font-weight="bold" font-size="7" fill="#222">A</text>
 <path d="M255 880 h18 v12 h-18z" fill="#e4e4e4" stroke="#888" stroke-width="0.800"/><path d="M255 880 h9 v6 h-9z" fill="#c81e1e"/><text x="256.500" y="886" font-family="Liberation Sans" font-weight="bold" font-size="8" fill="#fff">A</text>
 <rect x="303.500" y="878.500" width="16" height="12" fill="#9cc8ec" stroke="#e8f2fa" stroke-width="1.500"/><path d="M305 889 l4-5 3 3 3-4 4 6z" fill="#3f7fc0"/><path d="M302 877 h4 M302 877 v4 M321 877 h-4 M321 877 v4 M302 892 h4 M302 892 v-4 M321 892 h-4 M321 892 v-4" stroke="#1e5a9e" stroke-width="1.400" fill="none"/>
</svg>
<div class="t" style="left:1182px;top:876px;line-height:14px;color:#fff;font-size:11px">IT</div>
<svg class="abs" style="left:1195px;top:872px" width="150" height="28" viewBox="1195 872 150 28" fill="none">
 <rect x="1201.500" y="882.500" width="15" height="8" rx="1" fill="#c8c8c8" stroke="#888"/><path d="M1203 885 h12 M1203 887.500 h12" stroke="#555" stroke-dasharray="1.500 1"/><path d="M1205 882 q2-4 8-5" stroke="#bbb" stroke-width="1.200"/>
 <path d="M1229 888 h7 l-3.500-4z" fill="#e8e8e8"/>
 <path d="M1251.500 879 v13" stroke="#fff" stroke-width="1.600"/><path d="M1253 880 q3-1.500 6 0 t6 0 v6 q-3 1.500-6 0 t-6 0z" fill="#fff"/>
 <rect x="1276.500" y="880.500" width="8" height="11" rx="1" fill="#ddd" stroke="#fff"/><path d="M1278 879 v-1.500 h5 V879" stroke="#fff"/><path d="M1283 883 h4 v4 h-3 M1287 885 h2" stroke="#fff" stroke-width="1.400"/>
 <path d="M1299 890.500 h2 M1303 890.500 v-2 M1306 890.500 v-4 M1309 890.500 v-6 M1312 890.500 v-9" stroke="#fff" stroke-width="2"/>
 <path d="M1325 883 h3 l4-4 v12 l-4-4 h-3z" fill="#fff"/><path d="M1334.500 881 q2.500 4 0 8" stroke="#fff" stroke-width="1.200"/>
</svg>
<div class="t" style="left:1371px;top:878px;line-height:14px;color:#fff;font-size:12px;letter-spacing:-0.300px">13:50</div>
<div class="abs" style="left:1427px;top:871px;width:13px;height:29px;border-left:1px solid #6a6e72;background:linear-gradient(90deg,#3a3d40,#1a1b1c)"></div>

</body></html>
